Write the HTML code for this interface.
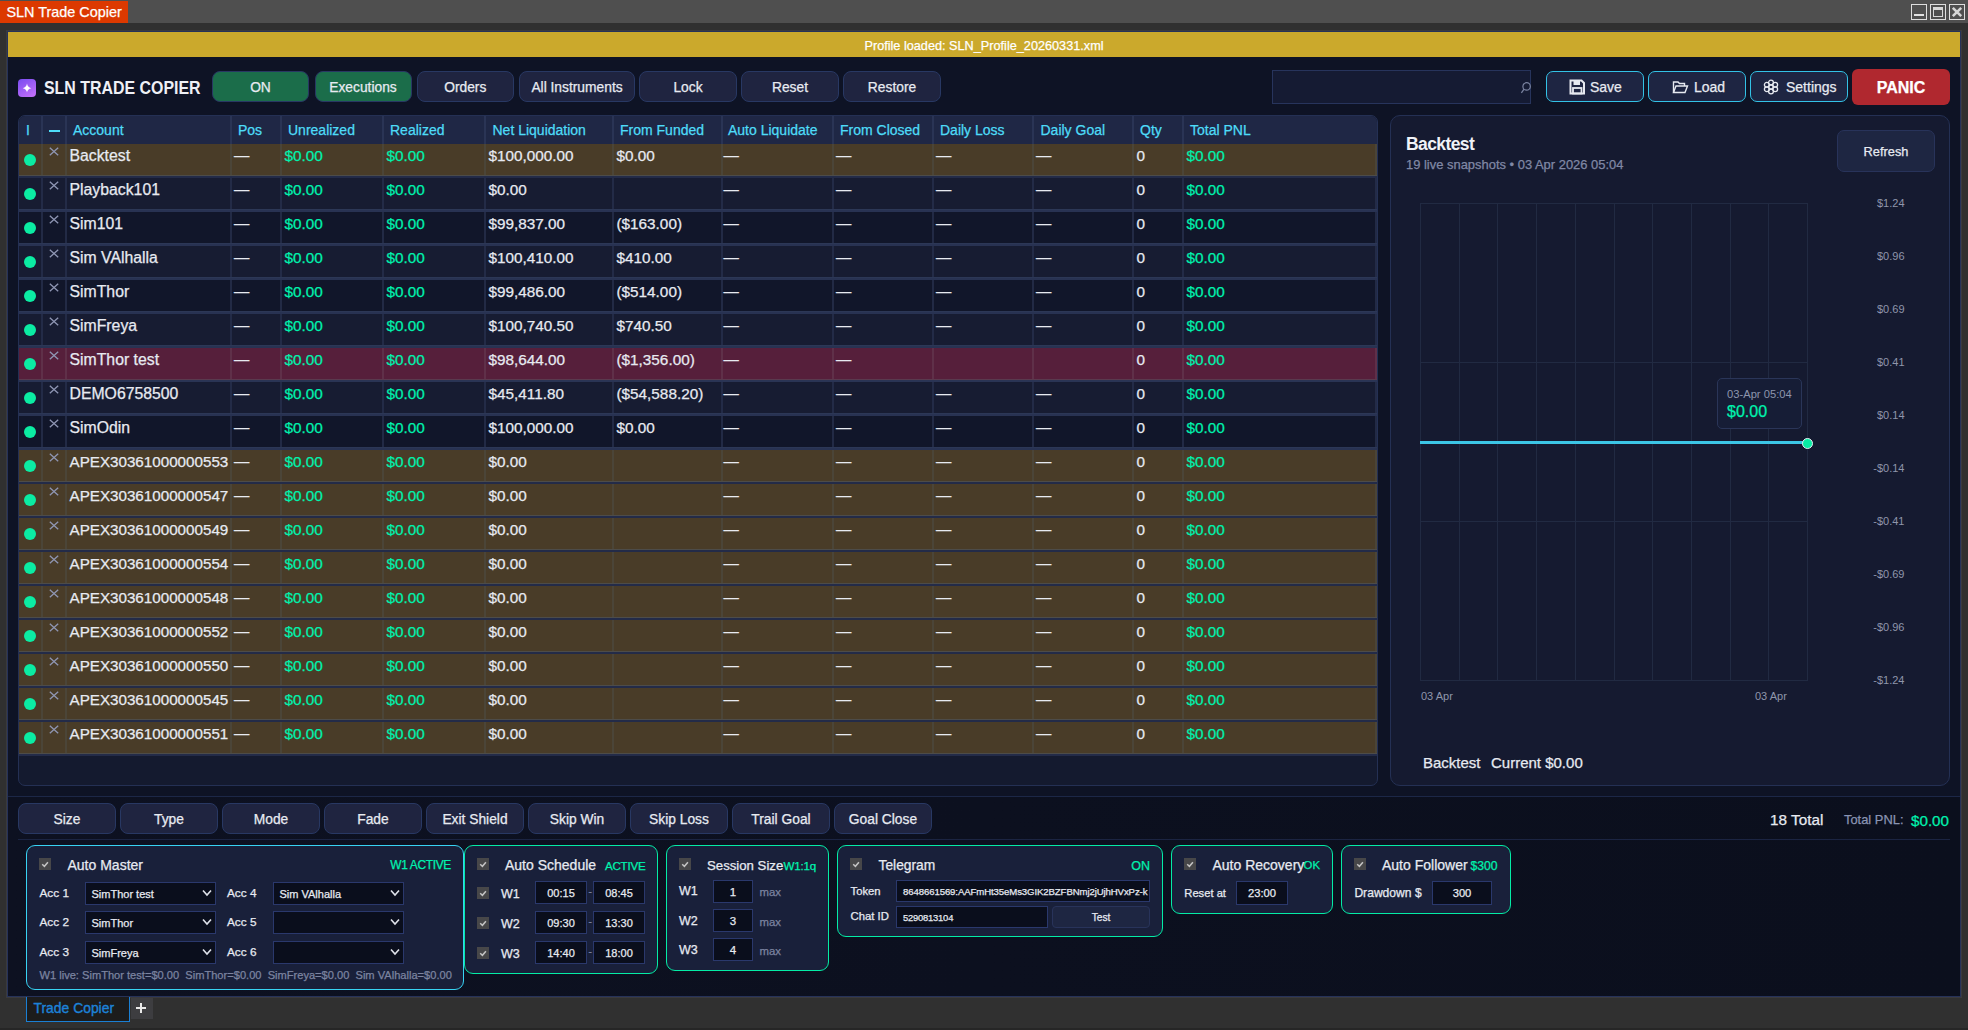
<!DOCTYPE html>
<html><head><meta charset="utf-8"><title>SLN Trade Copier</title>
<style>
html,body{margin:0;padding:0;}
body{width:1968px;height:1030px;overflow:hidden;position:relative;background:#303030;font-family:"Liberation Sans", sans-serif;}
div{position:absolute;}
.t{white-space:nowrap;-webkit-text-stroke:0.25px currentColor;}
</style></head><body>
<div style="left:0px;top:0px;width:1968px;height:23px;background:#4f4f4f"></div>
<div style="left:0px;top:1px;width:128px;height:22px;background:#dc3900"></div>
<div class="t" style="left:6.5px;top:5.01px;font-size:14.4px;line-height:14.4px;color:#ffffff;font-weight:400;">SLN Trade Copier</div>
<div style="left:1911px;top:4px;width:16px;height:16px;border:1.5px solid #dedede;box-sizing:border-box"></div>
<div style="left:1930px;top:4px;width:16px;height:16px;border:1.5px solid #dedede;box-sizing:border-box"></div>
<div style="left:1949px;top:4px;width:16px;height:16px;border:1.5px solid #dedede;box-sizing:border-box"></div>
<div style="left:1914px;top:14px;width:10px;height:2px;background:#e0e0e0"></div>
<div style="left:1933px;top:7px;width:10px;height:10px;border:1px solid #d8d8d8;border-top:3px solid #d8d8d8;box-sizing:border-box"></div>
<svg style="position:absolute;left:1949px;top:4px" width="16" height="16"><path d="M3.8 3.8 L12.2 12.2 M12.2 3.8 L3.8 12.2" stroke="#d6d6d6" stroke-width="2.6"/></svg>
<div style="left:6px;top:30px;width:1956px;height:968px;border:1px solid #3a3a3d;box-sizing:border-box"></div>
<div style="left:7px;top:31px;width:1954px;height:966px;background:#0e1325;border:1px solid #263259;box-sizing:border-box"></div>
<div style="left:8px;top:797px;width:1952px;height:199px;background:linear-gradient(90deg,#0d1121,#0b0f1d)"></div>
<div style="left:8px;top:32px;width:1952px;height:25px;background:#cba92c"></div>
<div class="t" style="left:8px;top:39.55px;font-size:12.7px;line-height:12.7px;color:#ffffff;font-weight:400;width:1952px;text-align:center;">Profile loaded: SLN_Profile_20260331.xml</div>
<div style="left:18px;top:79px;width:18px;height:18px;border-radius:4px;background:linear-gradient(150deg,#784cf0,#c972fb)"></div>
<svg style="position:absolute;left:18px;top:79px" width="18" height="18"><path d="M9 4.6 Q9.5 8.5 13.3 9.2 Q9.5 9.8 9 13.6 Q8.5 9.8 4.7 9.2 Q8.5 8.5 9 4.6Z" fill="#ffffff"/></svg>
<div class="t" style="left:43.5px;top:80.42px;font-size:17.7px;line-height:17.7px;color:#eef0f6;font-weight:700;-webkit-text-stroke:0;transform:scaleX(0.9);transform-origin:0 0">SLN TRADE COPIER</div>
<div style="left:212px;top:71px;width:97px;height:31px;background:#1b6d4a;border:1px solid #283863;border-radius:8px;box-sizing:border-box"></div>
<div class="t" style="left:212px;top:80.82px;font-size:13.8px;line-height:13.8px;color:#e7eaf1;font-weight:400;width:97px;text-align:center;">ON</div>
<div style="left:314.5px;top:71px;width:97px;height:31px;background:#1b6d4a;border:1px solid #283863;border-radius:8px;box-sizing:border-box"></div>
<div class="t" style="left:314.5px;top:80.82px;font-size:13.8px;line-height:13.8px;color:#e7eaf1;font-weight:400;width:97px;text-align:center;">Executions</div>
<div style="left:416.5px;top:71px;width:97.5px;height:31px;background:#1f2440;border:1px solid #283863;border-radius:8px;box-sizing:border-box"></div>
<div class="t" style="left:416.5px;top:80.82px;font-size:13.8px;line-height:13.8px;color:#e7eaf1;font-weight:400;width:97.5px;text-align:center;">Orders</div>
<div style="left:519px;top:71px;width:116px;height:31px;background:#1f2440;border:1px solid #283863;border-radius:8px;box-sizing:border-box"></div>
<div class="t" style="left:519px;top:80.82px;font-size:13.8px;line-height:13.8px;color:#e7eaf1;font-weight:400;width:116px;text-align:center;">All Instruments</div>
<div style="left:639px;top:71px;width:98px;height:31px;background:#1f2440;border:1px solid #283863;border-radius:8px;box-sizing:border-box"></div>
<div class="t" style="left:639px;top:80.82px;font-size:13.8px;line-height:13.8px;color:#e7eaf1;font-weight:400;width:98px;text-align:center;">Lock</div>
<div style="left:741px;top:71px;width:98px;height:31px;background:#1f2440;border:1px solid #283863;border-radius:8px;box-sizing:border-box"></div>
<div class="t" style="left:741px;top:80.82px;font-size:13.8px;line-height:13.8px;color:#e7eaf1;font-weight:400;width:98px;text-align:center;">Reset</div>
<div style="left:843px;top:71px;width:98px;height:31px;background:#1f2440;border:1px solid #283863;border-radius:8px;box-sizing:border-box"></div>
<div class="t" style="left:843px;top:80.82px;font-size:13.8px;line-height:13.8px;color:#e7eaf1;font-weight:400;width:98px;text-align:center;">Restore</div>
<div style="left:1272px;top:70px;width:259px;height:34px;background:#151b33;border:1px solid #27345c;box-sizing:border-box"></div>
<svg style="position:absolute;left:1518px;top:80px" width="14" height="14"><circle cx="8.6" cy="6.4" r="3.7" fill="none" stroke="#7a83a0" stroke-width="1.2"/><path d="M6 9.2 L3.4 12.8" stroke="#7a83a0" stroke-width="1.3"/></svg>
<div style="left:1546px;top:71px;width:98px;height:31px;background:#1e2542;border:1.5px solid #33c2e6;border-radius:7px;box-sizing:border-box"></div>
<div style="left:1648px;top:71px;width:98px;height:31px;background:#1e2542;border:1.5px solid #33c2e6;border-radius:7px;box-sizing:border-box"></div>
<div style="left:1750px;top:71px;width:98px;height:31px;background:#1e2542;border:1.5px solid #33c2e6;border-radius:7px;box-sizing:border-box"></div>
<div class="t" style="left:1590px;top:80.45px;font-size:14px;line-height:14px;color:#e7eaf1;font-weight:400;">Save</div>
<div class="t" style="left:1694px;top:80.45px;font-size:14px;line-height:14px;color:#e7eaf1;font-weight:400;">Load</div>
<div class="t" style="left:1786px;top:80.45px;font-size:14px;line-height:14px;color:#e7eaf1;font-weight:400;">Settings</div>
<svg style="position:absolute;left:1569px;top:79px" width="16" height="16"><path d="M1.5 1.5 H12.5 L15 4 V14.5 H1.5 Z" fill="none" stroke="#e7eaf1" stroke-width="2"/><rect x="4.5" y="2" width="6.5" height="4" fill="#e7eaf1"/><rect x="4" y="9" width="8.5" height="5.5" fill="none" stroke="#e7eaf1" stroke-width="1.8"/></svg>
<svg style="position:absolute;left:1672px;top:79px" width="17" height="16"><path d="M1.5 13.5 V3 H6 L7.5 4.5 H12.5 V7" fill="none" stroke="#e7eaf1" stroke-width="1.4"/><path d="M1.5 13.5 L4 7 H15.5 L13 13.5 Z" fill="none" stroke="#e7eaf1" stroke-width="1.4"/></svg>
<svg style="position:absolute;left:1763px;top:79px" width="16" height="16"><g fill="none" stroke="#e7eaf1" stroke-width="1.3"><circle cx="8" cy="8" r="2.2"/><circle cx="8" cy="3.6" r="2.4"/><circle cx="8" cy="12.4" r="2.4"/><circle cx="3.8" cy="5.8" r="2.4"/><circle cx="12.2" cy="5.8" r="2.4"/><circle cx="3.8" cy="10.2" r="2.4"/><circle cx="12.2" cy="10.2" r="2.4"/></g></svg>
<div style="left:1852px;top:69px;width:98px;height:36px;background:#b0282f;border-radius:6px"></div>
<div class="t" style="left:1852px;top:79.66px;font-size:16px;line-height:16px;color:#ffffff;font-weight:700;width:98px;text-align:center;">PANIC</div>
<div style="left:18px;top:115px;width:1360px;height:671px;background:#141a2f;border:1px solid #243054;border-radius:7px;box-sizing:border-box"></div>
<div style="left:19px;top:116px;width:1358px;height:28px;background:#1f2745;border-radius:6px 6px 0 0"></div>
<div style="left:41px;top:116px;width:2px;height:28px;background:#2a3455"></div>
<div style="left:65px;top:116px;width:2px;height:28px;background:#2a3455"></div>
<div style="left:230px;top:116px;width:2px;height:28px;background:#2a3455"></div>
<div style="left:280px;top:116px;width:2px;height:28px;background:#2a3455"></div>
<div style="left:382px;top:116px;width:2px;height:28px;background:#2a3455"></div>
<div style="left:484px;top:116px;width:2px;height:28px;background:#2a3455"></div>
<div style="left:612px;top:116px;width:2px;height:28px;background:#2a3455"></div>
<div style="left:720.5px;top:116px;width:2px;height:28px;background:#2a3455"></div>
<div style="left:832px;top:116px;width:2px;height:28px;background:#2a3455"></div>
<div style="left:932px;top:116px;width:2px;height:28px;background:#2a3455"></div>
<div style="left:1032px;top:116px;width:2px;height:28px;background:#2a3455"></div>
<div style="left:1132px;top:116px;width:2px;height:28px;background:#2a3455"></div>
<div style="left:1182px;top:116px;width:2px;height:28px;background:#2a3455"></div>
<div style="left:49px;top:130px;width:11px;height:2px;background:#4edcf8"></div>
<div class="t" style="left:26px;top:123.45px;font-size:14px;line-height:14px;color:#4edcf8;font-weight:400;">I</div>
<div class="t" style="left:73px;top:123.45px;font-size:14px;line-height:14px;color:#4edcf8;font-weight:400;">Account</div>
<div class="t" style="left:238px;top:123.45px;font-size:14px;line-height:14px;color:#4edcf8;font-weight:400;">Pos</div>
<div class="t" style="left:288px;top:123.45px;font-size:14px;line-height:14px;color:#4edcf8;font-weight:400;">Unrealized</div>
<div class="t" style="left:390px;top:123.45px;font-size:14px;line-height:14px;color:#4edcf8;font-weight:400;">Realized</div>
<div class="t" style="left:492.5px;top:123.45px;font-size:14px;line-height:14px;color:#4edcf8;font-weight:400;">Net Liquidation</div>
<div class="t" style="left:620px;top:123.45px;font-size:14px;line-height:14px;color:#4edcf8;font-weight:400;">From Funded</div>
<div class="t" style="left:728px;top:123.45px;font-size:14px;line-height:14px;color:#4edcf8;font-weight:400;">Auto Liquidate</div>
<div class="t" style="left:840px;top:123.45px;font-size:14px;line-height:14px;color:#4edcf8;font-weight:400;">From Closed</div>
<div class="t" style="left:940px;top:123.45px;font-size:14px;line-height:14px;color:#4edcf8;font-weight:400;">Daily Loss</div>
<div class="t" style="left:1040.5px;top:123.45px;font-size:14px;line-height:14px;color:#4edcf8;font-weight:400;">Daily Goal</div>
<div class="t" style="left:1140px;top:123.45px;font-size:14px;line-height:14px;color:#4edcf8;font-weight:400;">Qty</div>
<div class="t" style="left:1190px;top:123.45px;font-size:14px;line-height:14px;color:#4edcf8;font-weight:400;">Total PNL</div>
<div style="left:19px;top:144px;width:1358px;height:31px;background:#493c28"></div>
<div style="left:19px;top:175px;width:1358px;height:1px;background:#4d4c49"></div>
<div style="left:19px;top:176px;width:1358px;height:2px;background:#232b48"></div>
<div style="left:41px;top:144px;width:2px;height:31px;background:#4b4538"></div>
<div style="left:65px;top:144px;width:2px;height:31px;background:#4b4538"></div>
<div style="left:230px;top:144px;width:2px;height:31px;background:#4b4538"></div>
<div style="left:280px;top:144px;width:2px;height:31px;background:#4b4538"></div>
<div style="left:382px;top:144px;width:2px;height:31px;background:#4b4538"></div>
<div style="left:484px;top:144px;width:2px;height:31px;background:#4b4538"></div>
<div style="left:612px;top:144px;width:2px;height:31px;background:#4b4538"></div>
<div style="left:720.5px;top:144px;width:2px;height:31px;background:#4b4538"></div>
<div style="left:832px;top:144px;width:2px;height:31px;background:#4b4538"></div>
<div style="left:932px;top:144px;width:2px;height:31px;background:#4b4538"></div>
<div style="left:1032px;top:144px;width:2px;height:31px;background:#4b4538"></div>
<div style="left:1132px;top:144px;width:2px;height:31px;background:#4b4538"></div>
<div style="left:1182px;top:144px;width:2px;height:31px;background:#4b4538"></div>
<div style="left:1375px;top:144px;width:2px;height:31px;background:#4b4538"></div>
<div style="left:24px;top:154px;width:12px;height:12px;border-radius:50%;background:#0becA3"></div>
<svg style="position:absolute;left:49px;top:147px" width="10" height="9"><path d="M0.8 0.8 L9.2 8.2 M9.2 0.8 L0.8 8.2" stroke="#8f96b4" stroke-width="1.3"/></svg>
<div style="left:67px;top:144px;width:163px;height:31px;overflow:hidden">
<div class="t" style="left:2.5px;top:3.93px;font-size:15.8px;line-height:15.8px;color:#e7eaf1;font-weight:400;">Backtest</div>
</div>
<div class="t" style="left:234px;top:147.35px;font-size:15.3px;line-height:15.3px;color:#e7eaf1;font-weight:400;">—</div>
<div class="t" style="left:284.5px;top:148.35px;font-size:15.3px;line-height:15.3px;color:#00f2ae;font-weight:400;">$0.00</div>
<div class="t" style="left:386.5px;top:148.35px;font-size:15.3px;line-height:15.3px;color:#00f2ae;font-weight:400;">$0.00</div>
<div class="t" style="left:488.5px;top:148.35px;font-size:15.3px;line-height:15.3px;color:#e7eaf1;font-weight:400;">$100,000.00</div>
<div class="t" style="left:616.5px;top:148.35px;font-size:15.3px;line-height:15.3px;color:#e7eaf1;font-weight:400;">$0.00</div>
<div class="t" style="left:723.5px;top:147.35px;font-size:15.3px;line-height:15.3px;color:#e7eaf1;font-weight:400;">—</div>
<div class="t" style="left:836px;top:147.35px;font-size:15.3px;line-height:15.3px;color:#e7eaf1;font-weight:400;">—</div>
<div class="t" style="left:936px;top:147.35px;font-size:15.3px;line-height:15.3px;color:#e7eaf1;font-weight:400;">—</div>
<div class="t" style="left:1036px;top:147.35px;font-size:15.3px;line-height:15.3px;color:#e7eaf1;font-weight:400;">—</div>
<div class="t" style="left:1136.5px;top:148.35px;font-size:15.3px;line-height:15.3px;color:#e7eaf1;font-weight:400;">0</div>
<div class="t" style="left:1186.5px;top:148.35px;font-size:15.3px;line-height:15.3px;color:#00f2ae;font-weight:400;">$0.00</div>
<div style="left:19px;top:178px;width:1358px;height:31px;background:#171c32"></div>
<div style="left:19px;top:209px;width:1358px;height:1px;background:#2c3756"></div>
<div style="left:19px;top:210px;width:1358px;height:2px;background:#283252"></div>
<div style="left:41px;top:178px;width:2px;height:31px;background:#232b47"></div>
<div style="left:65px;top:178px;width:2px;height:31px;background:#232b47"></div>
<div style="left:230px;top:178px;width:2px;height:31px;background:#232b47"></div>
<div style="left:280px;top:178px;width:2px;height:31px;background:#232b47"></div>
<div style="left:382px;top:178px;width:2px;height:31px;background:#232b47"></div>
<div style="left:484px;top:178px;width:2px;height:31px;background:#232b47"></div>
<div style="left:612px;top:178px;width:2px;height:31px;background:#232b47"></div>
<div style="left:720.5px;top:178px;width:2px;height:31px;background:#232b47"></div>
<div style="left:832px;top:178px;width:2px;height:31px;background:#232b47"></div>
<div style="left:932px;top:178px;width:2px;height:31px;background:#232b47"></div>
<div style="left:1032px;top:178px;width:2px;height:31px;background:#232b47"></div>
<div style="left:1132px;top:178px;width:2px;height:31px;background:#232b47"></div>
<div style="left:1182px;top:178px;width:2px;height:31px;background:#232b47"></div>
<div style="left:1375px;top:178px;width:2px;height:31px;background:#232b47"></div>
<div style="left:24px;top:188px;width:12px;height:12px;border-radius:50%;background:#0becA3"></div>
<svg style="position:absolute;left:49px;top:181px" width="10" height="9"><path d="M0.8 0.8 L9.2 8.2 M9.2 0.8 L0.8 8.2" stroke="#8f96b4" stroke-width="1.3"/></svg>
<div style="left:67px;top:178px;width:163px;height:31px;overflow:hidden">
<div class="t" style="left:2.5px;top:3.93px;font-size:15.8px;line-height:15.8px;color:#e7eaf1;font-weight:400;">Playback101</div>
</div>
<div class="t" style="left:234px;top:181.35px;font-size:15.3px;line-height:15.3px;color:#e7eaf1;font-weight:400;">—</div>
<div class="t" style="left:284.5px;top:182.35px;font-size:15.3px;line-height:15.3px;color:#00f2ae;font-weight:400;">$0.00</div>
<div class="t" style="left:386.5px;top:182.35px;font-size:15.3px;line-height:15.3px;color:#00f2ae;font-weight:400;">$0.00</div>
<div class="t" style="left:488.5px;top:182.35px;font-size:15.3px;line-height:15.3px;color:#e7eaf1;font-weight:400;">$0.00</div>
<div class="t" style="left:723.5px;top:181.35px;font-size:15.3px;line-height:15.3px;color:#e7eaf1;font-weight:400;">—</div>
<div class="t" style="left:836px;top:181.35px;font-size:15.3px;line-height:15.3px;color:#e7eaf1;font-weight:400;">—</div>
<div class="t" style="left:936px;top:181.35px;font-size:15.3px;line-height:15.3px;color:#e7eaf1;font-weight:400;">—</div>
<div class="t" style="left:1036px;top:181.35px;font-size:15.3px;line-height:15.3px;color:#e7eaf1;font-weight:400;">—</div>
<div class="t" style="left:1136.5px;top:182.35px;font-size:15.3px;line-height:15.3px;color:#e7eaf1;font-weight:400;">0</div>
<div class="t" style="left:1186.5px;top:182.35px;font-size:15.3px;line-height:15.3px;color:#00f2ae;font-weight:400;">$0.00</div>
<div style="left:19px;top:212px;width:1358px;height:31px;background:#11162a"></div>
<div style="left:19px;top:243px;width:1358px;height:1px;background:#2c3756"></div>
<div style="left:19px;top:244px;width:1358px;height:2px;background:#283252"></div>
<div style="left:41px;top:212px;width:2px;height:31px;background:#222a45"></div>
<div style="left:65px;top:212px;width:2px;height:31px;background:#222a45"></div>
<div style="left:230px;top:212px;width:2px;height:31px;background:#222a45"></div>
<div style="left:280px;top:212px;width:2px;height:31px;background:#222a45"></div>
<div style="left:382px;top:212px;width:2px;height:31px;background:#222a45"></div>
<div style="left:484px;top:212px;width:2px;height:31px;background:#222a45"></div>
<div style="left:612px;top:212px;width:2px;height:31px;background:#222a45"></div>
<div style="left:720.5px;top:212px;width:2px;height:31px;background:#222a45"></div>
<div style="left:832px;top:212px;width:2px;height:31px;background:#222a45"></div>
<div style="left:932px;top:212px;width:2px;height:31px;background:#222a45"></div>
<div style="left:1032px;top:212px;width:2px;height:31px;background:#222a45"></div>
<div style="left:1132px;top:212px;width:2px;height:31px;background:#222a45"></div>
<div style="left:1182px;top:212px;width:2px;height:31px;background:#222a45"></div>
<div style="left:1375px;top:212px;width:2px;height:31px;background:#222a45"></div>
<div style="left:24px;top:222px;width:12px;height:12px;border-radius:50%;background:#0becA3"></div>
<svg style="position:absolute;left:49px;top:215px" width="10" height="9"><path d="M0.8 0.8 L9.2 8.2 M9.2 0.8 L0.8 8.2" stroke="#8f96b4" stroke-width="1.3"/></svg>
<div style="left:67px;top:212px;width:163px;height:31px;overflow:hidden">
<div class="t" style="left:2.5px;top:3.93px;font-size:15.8px;line-height:15.8px;color:#e7eaf1;font-weight:400;">Sim101</div>
</div>
<div class="t" style="left:234px;top:215.35px;font-size:15.3px;line-height:15.3px;color:#e7eaf1;font-weight:400;">—</div>
<div class="t" style="left:284.5px;top:216.35px;font-size:15.3px;line-height:15.3px;color:#00f2ae;font-weight:400;">$0.00</div>
<div class="t" style="left:386.5px;top:216.35px;font-size:15.3px;line-height:15.3px;color:#00f2ae;font-weight:400;">$0.00</div>
<div class="t" style="left:488.5px;top:216.35px;font-size:15.3px;line-height:15.3px;color:#e7eaf1;font-weight:400;">$99,837.00</div>
<div class="t" style="left:616.5px;top:216.35px;font-size:15.3px;line-height:15.3px;color:#e7eaf1;font-weight:400;">($163.00)</div>
<div class="t" style="left:723.5px;top:215.35px;font-size:15.3px;line-height:15.3px;color:#e7eaf1;font-weight:400;">—</div>
<div class="t" style="left:836px;top:215.35px;font-size:15.3px;line-height:15.3px;color:#e7eaf1;font-weight:400;">—</div>
<div class="t" style="left:936px;top:215.35px;font-size:15.3px;line-height:15.3px;color:#e7eaf1;font-weight:400;">—</div>
<div class="t" style="left:1036px;top:215.35px;font-size:15.3px;line-height:15.3px;color:#e7eaf1;font-weight:400;">—</div>
<div class="t" style="left:1136.5px;top:216.35px;font-size:15.3px;line-height:15.3px;color:#e7eaf1;font-weight:400;">0</div>
<div class="t" style="left:1186.5px;top:216.35px;font-size:15.3px;line-height:15.3px;color:#00f2ae;font-weight:400;">$0.00</div>
<div style="left:19px;top:246px;width:1358px;height:31px;background:#171c32"></div>
<div style="left:19px;top:277px;width:1358px;height:1px;background:#2c3756"></div>
<div style="left:19px;top:278px;width:1358px;height:2px;background:#283252"></div>
<div style="left:41px;top:246px;width:2px;height:31px;background:#232b47"></div>
<div style="left:65px;top:246px;width:2px;height:31px;background:#232b47"></div>
<div style="left:230px;top:246px;width:2px;height:31px;background:#232b47"></div>
<div style="left:280px;top:246px;width:2px;height:31px;background:#232b47"></div>
<div style="left:382px;top:246px;width:2px;height:31px;background:#232b47"></div>
<div style="left:484px;top:246px;width:2px;height:31px;background:#232b47"></div>
<div style="left:612px;top:246px;width:2px;height:31px;background:#232b47"></div>
<div style="left:720.5px;top:246px;width:2px;height:31px;background:#232b47"></div>
<div style="left:832px;top:246px;width:2px;height:31px;background:#232b47"></div>
<div style="left:932px;top:246px;width:2px;height:31px;background:#232b47"></div>
<div style="left:1032px;top:246px;width:2px;height:31px;background:#232b47"></div>
<div style="left:1132px;top:246px;width:2px;height:31px;background:#232b47"></div>
<div style="left:1182px;top:246px;width:2px;height:31px;background:#232b47"></div>
<div style="left:1375px;top:246px;width:2px;height:31px;background:#232b47"></div>
<div style="left:24px;top:256px;width:12px;height:12px;border-radius:50%;background:#0becA3"></div>
<svg style="position:absolute;left:49px;top:249px" width="10" height="9"><path d="M0.8 0.8 L9.2 8.2 M9.2 0.8 L0.8 8.2" stroke="#8f96b4" stroke-width="1.3"/></svg>
<div style="left:67px;top:246px;width:163px;height:31px;overflow:hidden">
<div class="t" style="left:2.5px;top:3.93px;font-size:15.8px;line-height:15.8px;color:#e7eaf1;font-weight:400;">Sim VAlhalla</div>
</div>
<div class="t" style="left:234px;top:249.35px;font-size:15.3px;line-height:15.3px;color:#e7eaf1;font-weight:400;">—</div>
<div class="t" style="left:284.5px;top:250.35px;font-size:15.3px;line-height:15.3px;color:#00f2ae;font-weight:400;">$0.00</div>
<div class="t" style="left:386.5px;top:250.35px;font-size:15.3px;line-height:15.3px;color:#00f2ae;font-weight:400;">$0.00</div>
<div class="t" style="left:488.5px;top:250.35px;font-size:15.3px;line-height:15.3px;color:#e7eaf1;font-weight:400;">$100,410.00</div>
<div class="t" style="left:616.5px;top:250.35px;font-size:15.3px;line-height:15.3px;color:#e7eaf1;font-weight:400;">$410.00</div>
<div class="t" style="left:723.5px;top:249.35px;font-size:15.3px;line-height:15.3px;color:#e7eaf1;font-weight:400;">—</div>
<div class="t" style="left:836px;top:249.35px;font-size:15.3px;line-height:15.3px;color:#e7eaf1;font-weight:400;">—</div>
<div class="t" style="left:936px;top:249.35px;font-size:15.3px;line-height:15.3px;color:#e7eaf1;font-weight:400;">—</div>
<div class="t" style="left:1036px;top:249.35px;font-size:15.3px;line-height:15.3px;color:#e7eaf1;font-weight:400;">—</div>
<div class="t" style="left:1136.5px;top:250.35px;font-size:15.3px;line-height:15.3px;color:#e7eaf1;font-weight:400;">0</div>
<div class="t" style="left:1186.5px;top:250.35px;font-size:15.3px;line-height:15.3px;color:#00f2ae;font-weight:400;">$0.00</div>
<div style="left:19px;top:280px;width:1358px;height:31px;background:#11162a"></div>
<div style="left:19px;top:311px;width:1358px;height:1px;background:#2c3756"></div>
<div style="left:19px;top:312px;width:1358px;height:2px;background:#283252"></div>
<div style="left:41px;top:280px;width:2px;height:31px;background:#222a45"></div>
<div style="left:65px;top:280px;width:2px;height:31px;background:#222a45"></div>
<div style="left:230px;top:280px;width:2px;height:31px;background:#222a45"></div>
<div style="left:280px;top:280px;width:2px;height:31px;background:#222a45"></div>
<div style="left:382px;top:280px;width:2px;height:31px;background:#222a45"></div>
<div style="left:484px;top:280px;width:2px;height:31px;background:#222a45"></div>
<div style="left:612px;top:280px;width:2px;height:31px;background:#222a45"></div>
<div style="left:720.5px;top:280px;width:2px;height:31px;background:#222a45"></div>
<div style="left:832px;top:280px;width:2px;height:31px;background:#222a45"></div>
<div style="left:932px;top:280px;width:2px;height:31px;background:#222a45"></div>
<div style="left:1032px;top:280px;width:2px;height:31px;background:#222a45"></div>
<div style="left:1132px;top:280px;width:2px;height:31px;background:#222a45"></div>
<div style="left:1182px;top:280px;width:2px;height:31px;background:#222a45"></div>
<div style="left:1375px;top:280px;width:2px;height:31px;background:#222a45"></div>
<div style="left:24px;top:290px;width:12px;height:12px;border-radius:50%;background:#0becA3"></div>
<svg style="position:absolute;left:49px;top:283px" width="10" height="9"><path d="M0.8 0.8 L9.2 8.2 M9.2 0.8 L0.8 8.2" stroke="#8f96b4" stroke-width="1.3"/></svg>
<div style="left:67px;top:280px;width:163px;height:31px;overflow:hidden">
<div class="t" style="left:2.5px;top:3.93px;font-size:15.8px;line-height:15.8px;color:#e7eaf1;font-weight:400;">SimThor</div>
</div>
<div class="t" style="left:234px;top:283.35px;font-size:15.3px;line-height:15.3px;color:#e7eaf1;font-weight:400;">—</div>
<div class="t" style="left:284.5px;top:284.35px;font-size:15.3px;line-height:15.3px;color:#00f2ae;font-weight:400;">$0.00</div>
<div class="t" style="left:386.5px;top:284.35px;font-size:15.3px;line-height:15.3px;color:#00f2ae;font-weight:400;">$0.00</div>
<div class="t" style="left:488.5px;top:284.35px;font-size:15.3px;line-height:15.3px;color:#e7eaf1;font-weight:400;">$99,486.00</div>
<div class="t" style="left:616.5px;top:284.35px;font-size:15.3px;line-height:15.3px;color:#e7eaf1;font-weight:400;">($514.00)</div>
<div class="t" style="left:723.5px;top:283.35px;font-size:15.3px;line-height:15.3px;color:#e7eaf1;font-weight:400;">—</div>
<div class="t" style="left:836px;top:283.35px;font-size:15.3px;line-height:15.3px;color:#e7eaf1;font-weight:400;">—</div>
<div class="t" style="left:936px;top:283.35px;font-size:15.3px;line-height:15.3px;color:#e7eaf1;font-weight:400;">—</div>
<div class="t" style="left:1036px;top:283.35px;font-size:15.3px;line-height:15.3px;color:#e7eaf1;font-weight:400;">—</div>
<div class="t" style="left:1136.5px;top:284.35px;font-size:15.3px;line-height:15.3px;color:#e7eaf1;font-weight:400;">0</div>
<div class="t" style="left:1186.5px;top:284.35px;font-size:15.3px;line-height:15.3px;color:#00f2ae;font-weight:400;">$0.00</div>
<div style="left:19px;top:314px;width:1358px;height:31px;background:#171c32"></div>
<div style="left:19px;top:345px;width:1358px;height:1px;background:#2c3756"></div>
<div style="left:19px;top:346px;width:1358px;height:2px;background:#283252"></div>
<div style="left:41px;top:314px;width:2px;height:31px;background:#232b47"></div>
<div style="left:65px;top:314px;width:2px;height:31px;background:#232b47"></div>
<div style="left:230px;top:314px;width:2px;height:31px;background:#232b47"></div>
<div style="left:280px;top:314px;width:2px;height:31px;background:#232b47"></div>
<div style="left:382px;top:314px;width:2px;height:31px;background:#232b47"></div>
<div style="left:484px;top:314px;width:2px;height:31px;background:#232b47"></div>
<div style="left:612px;top:314px;width:2px;height:31px;background:#232b47"></div>
<div style="left:720.5px;top:314px;width:2px;height:31px;background:#232b47"></div>
<div style="left:832px;top:314px;width:2px;height:31px;background:#232b47"></div>
<div style="left:932px;top:314px;width:2px;height:31px;background:#232b47"></div>
<div style="left:1032px;top:314px;width:2px;height:31px;background:#232b47"></div>
<div style="left:1132px;top:314px;width:2px;height:31px;background:#232b47"></div>
<div style="left:1182px;top:314px;width:2px;height:31px;background:#232b47"></div>
<div style="left:1375px;top:314px;width:2px;height:31px;background:#232b47"></div>
<div style="left:24px;top:324px;width:12px;height:12px;border-radius:50%;background:#0becA3"></div>
<svg style="position:absolute;left:49px;top:317px" width="10" height="9"><path d="M0.8 0.8 L9.2 8.2 M9.2 0.8 L0.8 8.2" stroke="#8f96b4" stroke-width="1.3"/></svg>
<div style="left:67px;top:314px;width:163px;height:31px;overflow:hidden">
<div class="t" style="left:2.5px;top:3.93px;font-size:15.8px;line-height:15.8px;color:#e7eaf1;font-weight:400;">SimFreya</div>
</div>
<div class="t" style="left:234px;top:317.35px;font-size:15.3px;line-height:15.3px;color:#e7eaf1;font-weight:400;">—</div>
<div class="t" style="left:284.5px;top:318.35px;font-size:15.3px;line-height:15.3px;color:#00f2ae;font-weight:400;">$0.00</div>
<div class="t" style="left:386.5px;top:318.35px;font-size:15.3px;line-height:15.3px;color:#00f2ae;font-weight:400;">$0.00</div>
<div class="t" style="left:488.5px;top:318.35px;font-size:15.3px;line-height:15.3px;color:#e7eaf1;font-weight:400;">$100,740.50</div>
<div class="t" style="left:616.5px;top:318.35px;font-size:15.3px;line-height:15.3px;color:#e7eaf1;font-weight:400;">$740.50</div>
<div class="t" style="left:723.5px;top:317.35px;font-size:15.3px;line-height:15.3px;color:#e7eaf1;font-weight:400;">—</div>
<div class="t" style="left:836px;top:317.35px;font-size:15.3px;line-height:15.3px;color:#e7eaf1;font-weight:400;">—</div>
<div class="t" style="left:936px;top:317.35px;font-size:15.3px;line-height:15.3px;color:#e7eaf1;font-weight:400;">—</div>
<div class="t" style="left:1036px;top:317.35px;font-size:15.3px;line-height:15.3px;color:#e7eaf1;font-weight:400;">—</div>
<div class="t" style="left:1136.5px;top:318.35px;font-size:15.3px;line-height:15.3px;color:#e7eaf1;font-weight:400;">0</div>
<div class="t" style="left:1186.5px;top:318.35px;font-size:15.3px;line-height:15.3px;color:#00f2ae;font-weight:400;">$0.00</div>
<div style="left:19px;top:348px;width:1358px;height:31px;background:#561f3b"></div>
<div style="left:19px;top:379px;width:1358px;height:1px;background:#5a3a4e"></div>
<div style="left:19px;top:380px;width:1358px;height:2px;background:#2a3454"></div>
<div style="left:41px;top:348px;width:2px;height:31px;background:#5f3049"></div>
<div style="left:65px;top:348px;width:2px;height:31px;background:#5f3049"></div>
<div style="left:230px;top:348px;width:2px;height:31px;background:#5f3049"></div>
<div style="left:280px;top:348px;width:2px;height:31px;background:#5f3049"></div>
<div style="left:382px;top:348px;width:2px;height:31px;background:#5f3049"></div>
<div style="left:484px;top:348px;width:2px;height:31px;background:#5f3049"></div>
<div style="left:612px;top:348px;width:2px;height:31px;background:#5f3049"></div>
<div style="left:720.5px;top:348px;width:2px;height:31px;background:#5f3049"></div>
<div style="left:832px;top:348px;width:2px;height:31px;background:#5f3049"></div>
<div style="left:932px;top:348px;width:2px;height:31px;background:#5f3049"></div>
<div style="left:1032px;top:348px;width:2px;height:31px;background:#5f3049"></div>
<div style="left:1132px;top:348px;width:2px;height:31px;background:#5f3049"></div>
<div style="left:1182px;top:348px;width:2px;height:31px;background:#5f3049"></div>
<div style="left:1375px;top:348px;width:2px;height:31px;background:#5f3049"></div>
<div style="left:24px;top:358px;width:12px;height:12px;border-radius:50%;background:#0becA3"></div>
<svg style="position:absolute;left:49px;top:351px" width="10" height="9"><path d="M0.8 0.8 L9.2 8.2 M9.2 0.8 L0.8 8.2" stroke="#8f96b4" stroke-width="1.3"/></svg>
<div style="left:67px;top:348px;width:163px;height:31px;overflow:hidden">
<div class="t" style="left:2.5px;top:3.93px;font-size:15.8px;line-height:15.8px;color:#e7eaf1;font-weight:400;">SimThor test</div>
</div>
<div class="t" style="left:234px;top:351.35px;font-size:15.3px;line-height:15.3px;color:#e7eaf1;font-weight:400;">—</div>
<div class="t" style="left:284.5px;top:352.35px;font-size:15.3px;line-height:15.3px;color:#00f2ae;font-weight:400;">$0.00</div>
<div class="t" style="left:386.5px;top:352.35px;font-size:15.3px;line-height:15.3px;color:#00f2ae;font-weight:400;">$0.00</div>
<div class="t" style="left:488.5px;top:352.35px;font-size:15.3px;line-height:15.3px;color:#e7eaf1;font-weight:400;">$98,644.00</div>
<div class="t" style="left:616.5px;top:352.35px;font-size:15.3px;line-height:15.3px;color:#e7eaf1;font-weight:400;">($1,356.00)</div>
<div class="t" style="left:723.5px;top:351.35px;font-size:15.3px;line-height:15.3px;color:#e7eaf1;font-weight:400;">—</div>
<div class="t" style="left:836px;top:351.35px;font-size:15.3px;line-height:15.3px;color:#e7eaf1;font-weight:400;">—</div>
<div class="t" style="left:1136.5px;top:352.35px;font-size:15.3px;line-height:15.3px;color:#e7eaf1;font-weight:400;">0</div>
<div class="t" style="left:1186.5px;top:352.35px;font-size:15.3px;line-height:15.3px;color:#00f2ae;font-weight:400;">$0.00</div>
<div style="left:19px;top:382px;width:1358px;height:31px;background:#171c32"></div>
<div style="left:19px;top:413px;width:1358px;height:1px;background:#2c3756"></div>
<div style="left:19px;top:414px;width:1358px;height:2px;background:#283252"></div>
<div style="left:41px;top:382px;width:2px;height:31px;background:#232b47"></div>
<div style="left:65px;top:382px;width:2px;height:31px;background:#232b47"></div>
<div style="left:230px;top:382px;width:2px;height:31px;background:#232b47"></div>
<div style="left:280px;top:382px;width:2px;height:31px;background:#232b47"></div>
<div style="left:382px;top:382px;width:2px;height:31px;background:#232b47"></div>
<div style="left:484px;top:382px;width:2px;height:31px;background:#232b47"></div>
<div style="left:612px;top:382px;width:2px;height:31px;background:#232b47"></div>
<div style="left:720.5px;top:382px;width:2px;height:31px;background:#232b47"></div>
<div style="left:832px;top:382px;width:2px;height:31px;background:#232b47"></div>
<div style="left:932px;top:382px;width:2px;height:31px;background:#232b47"></div>
<div style="left:1032px;top:382px;width:2px;height:31px;background:#232b47"></div>
<div style="left:1132px;top:382px;width:2px;height:31px;background:#232b47"></div>
<div style="left:1182px;top:382px;width:2px;height:31px;background:#232b47"></div>
<div style="left:1375px;top:382px;width:2px;height:31px;background:#232b47"></div>
<div style="left:24px;top:392px;width:12px;height:12px;border-radius:50%;background:#0becA3"></div>
<svg style="position:absolute;left:49px;top:385px" width="10" height="9"><path d="M0.8 0.8 L9.2 8.2 M9.2 0.8 L0.8 8.2" stroke="#8f96b4" stroke-width="1.3"/></svg>
<div style="left:67px;top:382px;width:163px;height:31px;overflow:hidden">
<div class="t" style="left:2.5px;top:3.93px;font-size:15.8px;line-height:15.8px;color:#e7eaf1;font-weight:400;">DEMO6758500</div>
</div>
<div class="t" style="left:234px;top:385.35px;font-size:15.3px;line-height:15.3px;color:#e7eaf1;font-weight:400;">—</div>
<div class="t" style="left:284.5px;top:386.35px;font-size:15.3px;line-height:15.3px;color:#00f2ae;font-weight:400;">$0.00</div>
<div class="t" style="left:386.5px;top:386.35px;font-size:15.3px;line-height:15.3px;color:#00f2ae;font-weight:400;">$0.00</div>
<div class="t" style="left:488.5px;top:386.35px;font-size:15.3px;line-height:15.3px;color:#e7eaf1;font-weight:400;">$45,411.80</div>
<div class="t" style="left:616.5px;top:386.35px;font-size:15.3px;line-height:15.3px;color:#e7eaf1;font-weight:400;">($54,588.20)</div>
<div class="t" style="left:723.5px;top:385.35px;font-size:15.3px;line-height:15.3px;color:#e7eaf1;font-weight:400;">—</div>
<div class="t" style="left:836px;top:385.35px;font-size:15.3px;line-height:15.3px;color:#e7eaf1;font-weight:400;">—</div>
<div class="t" style="left:936px;top:385.35px;font-size:15.3px;line-height:15.3px;color:#e7eaf1;font-weight:400;">—</div>
<div class="t" style="left:1036px;top:385.35px;font-size:15.3px;line-height:15.3px;color:#e7eaf1;font-weight:400;">—</div>
<div class="t" style="left:1136.5px;top:386.35px;font-size:15.3px;line-height:15.3px;color:#e7eaf1;font-weight:400;">0</div>
<div class="t" style="left:1186.5px;top:386.35px;font-size:15.3px;line-height:15.3px;color:#00f2ae;font-weight:400;">$0.00</div>
<div style="left:19px;top:416px;width:1358px;height:31px;background:#11162a"></div>
<div style="left:19px;top:447px;width:1358px;height:1px;background:#2c3756"></div>
<div style="left:19px;top:448px;width:1358px;height:2px;background:#283252"></div>
<div style="left:41px;top:416px;width:2px;height:31px;background:#222a45"></div>
<div style="left:65px;top:416px;width:2px;height:31px;background:#222a45"></div>
<div style="left:230px;top:416px;width:2px;height:31px;background:#222a45"></div>
<div style="left:280px;top:416px;width:2px;height:31px;background:#222a45"></div>
<div style="left:382px;top:416px;width:2px;height:31px;background:#222a45"></div>
<div style="left:484px;top:416px;width:2px;height:31px;background:#222a45"></div>
<div style="left:612px;top:416px;width:2px;height:31px;background:#222a45"></div>
<div style="left:720.5px;top:416px;width:2px;height:31px;background:#222a45"></div>
<div style="left:832px;top:416px;width:2px;height:31px;background:#222a45"></div>
<div style="left:932px;top:416px;width:2px;height:31px;background:#222a45"></div>
<div style="left:1032px;top:416px;width:2px;height:31px;background:#222a45"></div>
<div style="left:1132px;top:416px;width:2px;height:31px;background:#222a45"></div>
<div style="left:1182px;top:416px;width:2px;height:31px;background:#222a45"></div>
<div style="left:1375px;top:416px;width:2px;height:31px;background:#222a45"></div>
<div style="left:24px;top:426px;width:12px;height:12px;border-radius:50%;background:#0becA3"></div>
<svg style="position:absolute;left:49px;top:419px" width="10" height="9"><path d="M0.8 0.8 L9.2 8.2 M9.2 0.8 L0.8 8.2" stroke="#8f96b4" stroke-width="1.3"/></svg>
<div style="left:67px;top:416px;width:163px;height:31px;overflow:hidden">
<div class="t" style="left:2.5px;top:3.93px;font-size:15.8px;line-height:15.8px;color:#e7eaf1;font-weight:400;">SimOdin</div>
</div>
<div class="t" style="left:234px;top:419.35px;font-size:15.3px;line-height:15.3px;color:#e7eaf1;font-weight:400;">—</div>
<div class="t" style="left:284.5px;top:420.35px;font-size:15.3px;line-height:15.3px;color:#00f2ae;font-weight:400;">$0.00</div>
<div class="t" style="left:386.5px;top:420.35px;font-size:15.3px;line-height:15.3px;color:#00f2ae;font-weight:400;">$0.00</div>
<div class="t" style="left:488.5px;top:420.35px;font-size:15.3px;line-height:15.3px;color:#e7eaf1;font-weight:400;">$100,000.00</div>
<div class="t" style="left:616.5px;top:420.35px;font-size:15.3px;line-height:15.3px;color:#e7eaf1;font-weight:400;">$0.00</div>
<div class="t" style="left:723.5px;top:419.35px;font-size:15.3px;line-height:15.3px;color:#e7eaf1;font-weight:400;">—</div>
<div class="t" style="left:836px;top:419.35px;font-size:15.3px;line-height:15.3px;color:#e7eaf1;font-weight:400;">—</div>
<div class="t" style="left:936px;top:419.35px;font-size:15.3px;line-height:15.3px;color:#e7eaf1;font-weight:400;">—</div>
<div class="t" style="left:1036px;top:419.35px;font-size:15.3px;line-height:15.3px;color:#e7eaf1;font-weight:400;">—</div>
<div class="t" style="left:1136.5px;top:420.35px;font-size:15.3px;line-height:15.3px;color:#e7eaf1;font-weight:400;">0</div>
<div class="t" style="left:1186.5px;top:420.35px;font-size:15.3px;line-height:15.3px;color:#00f2ae;font-weight:400;">$0.00</div>
<div style="left:19px;top:450px;width:1358px;height:31px;background:#493c28"></div>
<div style="left:19px;top:481px;width:1358px;height:1px;background:#4d4c49"></div>
<div style="left:19px;top:482px;width:1358px;height:2px;background:#232b48"></div>
<div style="left:41px;top:450px;width:2px;height:31px;background:#4b4538"></div>
<div style="left:65px;top:450px;width:2px;height:31px;background:#4b4538"></div>
<div style="left:230px;top:450px;width:2px;height:31px;background:#4b4538"></div>
<div style="left:280px;top:450px;width:2px;height:31px;background:#4b4538"></div>
<div style="left:382px;top:450px;width:2px;height:31px;background:#4b4538"></div>
<div style="left:484px;top:450px;width:2px;height:31px;background:#4b4538"></div>
<div style="left:612px;top:450px;width:2px;height:31px;background:#4b4538"></div>
<div style="left:720.5px;top:450px;width:2px;height:31px;background:#4b4538"></div>
<div style="left:832px;top:450px;width:2px;height:31px;background:#4b4538"></div>
<div style="left:932px;top:450px;width:2px;height:31px;background:#4b4538"></div>
<div style="left:1032px;top:450px;width:2px;height:31px;background:#4b4538"></div>
<div style="left:1132px;top:450px;width:2px;height:31px;background:#4b4538"></div>
<div style="left:1182px;top:450px;width:2px;height:31px;background:#4b4538"></div>
<div style="left:1375px;top:450px;width:2px;height:31px;background:#4b4538"></div>
<div style="left:24px;top:460px;width:12px;height:12px;border-radius:50%;background:#0becA3"></div>
<svg style="position:absolute;left:49px;top:453px" width="10" height="9"><path d="M0.8 0.8 L9.2 8.2 M9.2 0.8 L0.8 8.2" stroke="#8f96b4" stroke-width="1.3"/></svg>
<div style="left:67px;top:450px;width:163px;height:31px;overflow:hidden">
<div class="t" style="left:2.5px;top:4.43px;font-size:15.2px;line-height:15.2px;color:#e7eaf1;font-weight:400;">APEX30361000000553</div>
</div>
<div class="t" style="left:234px;top:453.35px;font-size:15.3px;line-height:15.3px;color:#e7eaf1;font-weight:400;">—</div>
<div class="t" style="left:284.5px;top:454.35px;font-size:15.3px;line-height:15.3px;color:#00f2ae;font-weight:400;">$0.00</div>
<div class="t" style="left:386.5px;top:454.35px;font-size:15.3px;line-height:15.3px;color:#00f2ae;font-weight:400;">$0.00</div>
<div class="t" style="left:488.5px;top:454.35px;font-size:15.3px;line-height:15.3px;color:#e7eaf1;font-weight:400;">$0.00</div>
<div class="t" style="left:723.5px;top:453.35px;font-size:15.3px;line-height:15.3px;color:#e7eaf1;font-weight:400;">—</div>
<div class="t" style="left:836px;top:453.35px;font-size:15.3px;line-height:15.3px;color:#e7eaf1;font-weight:400;">—</div>
<div class="t" style="left:936px;top:453.35px;font-size:15.3px;line-height:15.3px;color:#e7eaf1;font-weight:400;">—</div>
<div class="t" style="left:1036px;top:453.35px;font-size:15.3px;line-height:15.3px;color:#e7eaf1;font-weight:400;">—</div>
<div class="t" style="left:1136.5px;top:454.35px;font-size:15.3px;line-height:15.3px;color:#e7eaf1;font-weight:400;">0</div>
<div class="t" style="left:1186.5px;top:454.35px;font-size:15.3px;line-height:15.3px;color:#00f2ae;font-weight:400;">$0.00</div>
<div style="left:19px;top:484px;width:1358px;height:31px;background:#493c28"></div>
<div style="left:19px;top:515px;width:1358px;height:1px;background:#4d4c49"></div>
<div style="left:19px;top:516px;width:1358px;height:2px;background:#232b48"></div>
<div style="left:41px;top:484px;width:2px;height:31px;background:#4b4538"></div>
<div style="left:65px;top:484px;width:2px;height:31px;background:#4b4538"></div>
<div style="left:230px;top:484px;width:2px;height:31px;background:#4b4538"></div>
<div style="left:280px;top:484px;width:2px;height:31px;background:#4b4538"></div>
<div style="left:382px;top:484px;width:2px;height:31px;background:#4b4538"></div>
<div style="left:484px;top:484px;width:2px;height:31px;background:#4b4538"></div>
<div style="left:612px;top:484px;width:2px;height:31px;background:#4b4538"></div>
<div style="left:720.5px;top:484px;width:2px;height:31px;background:#4b4538"></div>
<div style="left:832px;top:484px;width:2px;height:31px;background:#4b4538"></div>
<div style="left:932px;top:484px;width:2px;height:31px;background:#4b4538"></div>
<div style="left:1032px;top:484px;width:2px;height:31px;background:#4b4538"></div>
<div style="left:1132px;top:484px;width:2px;height:31px;background:#4b4538"></div>
<div style="left:1182px;top:484px;width:2px;height:31px;background:#4b4538"></div>
<div style="left:1375px;top:484px;width:2px;height:31px;background:#4b4538"></div>
<div style="left:24px;top:494px;width:12px;height:12px;border-radius:50%;background:#0becA3"></div>
<svg style="position:absolute;left:49px;top:487px" width="10" height="9"><path d="M0.8 0.8 L9.2 8.2 M9.2 0.8 L0.8 8.2" stroke="#8f96b4" stroke-width="1.3"/></svg>
<div style="left:67px;top:484px;width:163px;height:31px;overflow:hidden">
<div class="t" style="left:2.5px;top:4.43px;font-size:15.2px;line-height:15.2px;color:#e7eaf1;font-weight:400;">APEX30361000000547</div>
</div>
<div class="t" style="left:234px;top:487.35px;font-size:15.3px;line-height:15.3px;color:#e7eaf1;font-weight:400;">—</div>
<div class="t" style="left:284.5px;top:488.35px;font-size:15.3px;line-height:15.3px;color:#00f2ae;font-weight:400;">$0.00</div>
<div class="t" style="left:386.5px;top:488.35px;font-size:15.3px;line-height:15.3px;color:#00f2ae;font-weight:400;">$0.00</div>
<div class="t" style="left:488.5px;top:488.35px;font-size:15.3px;line-height:15.3px;color:#e7eaf1;font-weight:400;">$0.00</div>
<div class="t" style="left:723.5px;top:487.35px;font-size:15.3px;line-height:15.3px;color:#e7eaf1;font-weight:400;">—</div>
<div class="t" style="left:836px;top:487.35px;font-size:15.3px;line-height:15.3px;color:#e7eaf1;font-weight:400;">—</div>
<div class="t" style="left:936px;top:487.35px;font-size:15.3px;line-height:15.3px;color:#e7eaf1;font-weight:400;">—</div>
<div class="t" style="left:1036px;top:487.35px;font-size:15.3px;line-height:15.3px;color:#e7eaf1;font-weight:400;">—</div>
<div class="t" style="left:1136.5px;top:488.35px;font-size:15.3px;line-height:15.3px;color:#e7eaf1;font-weight:400;">0</div>
<div class="t" style="left:1186.5px;top:488.35px;font-size:15.3px;line-height:15.3px;color:#00f2ae;font-weight:400;">$0.00</div>
<div style="left:19px;top:518px;width:1358px;height:31px;background:#493c28"></div>
<div style="left:19px;top:549px;width:1358px;height:1px;background:#4d4c49"></div>
<div style="left:19px;top:550px;width:1358px;height:2px;background:#232b48"></div>
<div style="left:41px;top:518px;width:2px;height:31px;background:#4b4538"></div>
<div style="left:65px;top:518px;width:2px;height:31px;background:#4b4538"></div>
<div style="left:230px;top:518px;width:2px;height:31px;background:#4b4538"></div>
<div style="left:280px;top:518px;width:2px;height:31px;background:#4b4538"></div>
<div style="left:382px;top:518px;width:2px;height:31px;background:#4b4538"></div>
<div style="left:484px;top:518px;width:2px;height:31px;background:#4b4538"></div>
<div style="left:612px;top:518px;width:2px;height:31px;background:#4b4538"></div>
<div style="left:720.5px;top:518px;width:2px;height:31px;background:#4b4538"></div>
<div style="left:832px;top:518px;width:2px;height:31px;background:#4b4538"></div>
<div style="left:932px;top:518px;width:2px;height:31px;background:#4b4538"></div>
<div style="left:1032px;top:518px;width:2px;height:31px;background:#4b4538"></div>
<div style="left:1132px;top:518px;width:2px;height:31px;background:#4b4538"></div>
<div style="left:1182px;top:518px;width:2px;height:31px;background:#4b4538"></div>
<div style="left:1375px;top:518px;width:2px;height:31px;background:#4b4538"></div>
<div style="left:24px;top:528px;width:12px;height:12px;border-radius:50%;background:#0becA3"></div>
<svg style="position:absolute;left:49px;top:521px" width="10" height="9"><path d="M0.8 0.8 L9.2 8.2 M9.2 0.8 L0.8 8.2" stroke="#8f96b4" stroke-width="1.3"/></svg>
<div style="left:67px;top:518px;width:163px;height:31px;overflow:hidden">
<div class="t" style="left:2.5px;top:4.43px;font-size:15.2px;line-height:15.2px;color:#e7eaf1;font-weight:400;">APEX30361000000549</div>
</div>
<div class="t" style="left:234px;top:521.35px;font-size:15.3px;line-height:15.3px;color:#e7eaf1;font-weight:400;">—</div>
<div class="t" style="left:284.5px;top:522.35px;font-size:15.3px;line-height:15.3px;color:#00f2ae;font-weight:400;">$0.00</div>
<div class="t" style="left:386.5px;top:522.35px;font-size:15.3px;line-height:15.3px;color:#00f2ae;font-weight:400;">$0.00</div>
<div class="t" style="left:488.5px;top:522.35px;font-size:15.3px;line-height:15.3px;color:#e7eaf1;font-weight:400;">$0.00</div>
<div class="t" style="left:723.5px;top:521.35px;font-size:15.3px;line-height:15.3px;color:#e7eaf1;font-weight:400;">—</div>
<div class="t" style="left:836px;top:521.35px;font-size:15.3px;line-height:15.3px;color:#e7eaf1;font-weight:400;">—</div>
<div class="t" style="left:936px;top:521.35px;font-size:15.3px;line-height:15.3px;color:#e7eaf1;font-weight:400;">—</div>
<div class="t" style="left:1036px;top:521.35px;font-size:15.3px;line-height:15.3px;color:#e7eaf1;font-weight:400;">—</div>
<div class="t" style="left:1136.5px;top:522.35px;font-size:15.3px;line-height:15.3px;color:#e7eaf1;font-weight:400;">0</div>
<div class="t" style="left:1186.5px;top:522.35px;font-size:15.3px;line-height:15.3px;color:#00f2ae;font-weight:400;">$0.00</div>
<div style="left:19px;top:552px;width:1358px;height:31px;background:#493c28"></div>
<div style="left:19px;top:583px;width:1358px;height:1px;background:#4d4c49"></div>
<div style="left:19px;top:584px;width:1358px;height:2px;background:#232b48"></div>
<div style="left:41px;top:552px;width:2px;height:31px;background:#4b4538"></div>
<div style="left:65px;top:552px;width:2px;height:31px;background:#4b4538"></div>
<div style="left:230px;top:552px;width:2px;height:31px;background:#4b4538"></div>
<div style="left:280px;top:552px;width:2px;height:31px;background:#4b4538"></div>
<div style="left:382px;top:552px;width:2px;height:31px;background:#4b4538"></div>
<div style="left:484px;top:552px;width:2px;height:31px;background:#4b4538"></div>
<div style="left:612px;top:552px;width:2px;height:31px;background:#4b4538"></div>
<div style="left:720.5px;top:552px;width:2px;height:31px;background:#4b4538"></div>
<div style="left:832px;top:552px;width:2px;height:31px;background:#4b4538"></div>
<div style="left:932px;top:552px;width:2px;height:31px;background:#4b4538"></div>
<div style="left:1032px;top:552px;width:2px;height:31px;background:#4b4538"></div>
<div style="left:1132px;top:552px;width:2px;height:31px;background:#4b4538"></div>
<div style="left:1182px;top:552px;width:2px;height:31px;background:#4b4538"></div>
<div style="left:1375px;top:552px;width:2px;height:31px;background:#4b4538"></div>
<div style="left:24px;top:562px;width:12px;height:12px;border-radius:50%;background:#0becA3"></div>
<svg style="position:absolute;left:49px;top:555px" width="10" height="9"><path d="M0.8 0.8 L9.2 8.2 M9.2 0.8 L0.8 8.2" stroke="#8f96b4" stroke-width="1.3"/></svg>
<div style="left:67px;top:552px;width:163px;height:31px;overflow:hidden">
<div class="t" style="left:2.5px;top:4.43px;font-size:15.2px;line-height:15.2px;color:#e7eaf1;font-weight:400;">APEX30361000000554</div>
</div>
<div class="t" style="left:234px;top:555.35px;font-size:15.3px;line-height:15.3px;color:#e7eaf1;font-weight:400;">—</div>
<div class="t" style="left:284.5px;top:556.35px;font-size:15.3px;line-height:15.3px;color:#00f2ae;font-weight:400;">$0.00</div>
<div class="t" style="left:386.5px;top:556.35px;font-size:15.3px;line-height:15.3px;color:#00f2ae;font-weight:400;">$0.00</div>
<div class="t" style="left:488.5px;top:556.35px;font-size:15.3px;line-height:15.3px;color:#e7eaf1;font-weight:400;">$0.00</div>
<div class="t" style="left:723.5px;top:555.35px;font-size:15.3px;line-height:15.3px;color:#e7eaf1;font-weight:400;">—</div>
<div class="t" style="left:836px;top:555.35px;font-size:15.3px;line-height:15.3px;color:#e7eaf1;font-weight:400;">—</div>
<div class="t" style="left:936px;top:555.35px;font-size:15.3px;line-height:15.3px;color:#e7eaf1;font-weight:400;">—</div>
<div class="t" style="left:1036px;top:555.35px;font-size:15.3px;line-height:15.3px;color:#e7eaf1;font-weight:400;">—</div>
<div class="t" style="left:1136.5px;top:556.35px;font-size:15.3px;line-height:15.3px;color:#e7eaf1;font-weight:400;">0</div>
<div class="t" style="left:1186.5px;top:556.35px;font-size:15.3px;line-height:15.3px;color:#00f2ae;font-weight:400;">$0.00</div>
<div style="left:19px;top:586px;width:1358px;height:31px;background:#493c28"></div>
<div style="left:19px;top:617px;width:1358px;height:1px;background:#4d4c49"></div>
<div style="left:19px;top:618px;width:1358px;height:2px;background:#232b48"></div>
<div style="left:41px;top:586px;width:2px;height:31px;background:#4b4538"></div>
<div style="left:65px;top:586px;width:2px;height:31px;background:#4b4538"></div>
<div style="left:230px;top:586px;width:2px;height:31px;background:#4b4538"></div>
<div style="left:280px;top:586px;width:2px;height:31px;background:#4b4538"></div>
<div style="left:382px;top:586px;width:2px;height:31px;background:#4b4538"></div>
<div style="left:484px;top:586px;width:2px;height:31px;background:#4b4538"></div>
<div style="left:612px;top:586px;width:2px;height:31px;background:#4b4538"></div>
<div style="left:720.5px;top:586px;width:2px;height:31px;background:#4b4538"></div>
<div style="left:832px;top:586px;width:2px;height:31px;background:#4b4538"></div>
<div style="left:932px;top:586px;width:2px;height:31px;background:#4b4538"></div>
<div style="left:1032px;top:586px;width:2px;height:31px;background:#4b4538"></div>
<div style="left:1132px;top:586px;width:2px;height:31px;background:#4b4538"></div>
<div style="left:1182px;top:586px;width:2px;height:31px;background:#4b4538"></div>
<div style="left:1375px;top:586px;width:2px;height:31px;background:#4b4538"></div>
<div style="left:24px;top:596px;width:12px;height:12px;border-radius:50%;background:#0becA3"></div>
<svg style="position:absolute;left:49px;top:589px" width="10" height="9"><path d="M0.8 0.8 L9.2 8.2 M9.2 0.8 L0.8 8.2" stroke="#8f96b4" stroke-width="1.3"/></svg>
<div style="left:67px;top:586px;width:163px;height:31px;overflow:hidden">
<div class="t" style="left:2.5px;top:4.43px;font-size:15.2px;line-height:15.2px;color:#e7eaf1;font-weight:400;">APEX30361000000548</div>
</div>
<div class="t" style="left:234px;top:589.35px;font-size:15.3px;line-height:15.3px;color:#e7eaf1;font-weight:400;">—</div>
<div class="t" style="left:284.5px;top:590.35px;font-size:15.3px;line-height:15.3px;color:#00f2ae;font-weight:400;">$0.00</div>
<div class="t" style="left:386.5px;top:590.35px;font-size:15.3px;line-height:15.3px;color:#00f2ae;font-weight:400;">$0.00</div>
<div class="t" style="left:488.5px;top:590.35px;font-size:15.3px;line-height:15.3px;color:#e7eaf1;font-weight:400;">$0.00</div>
<div class="t" style="left:723.5px;top:589.35px;font-size:15.3px;line-height:15.3px;color:#e7eaf1;font-weight:400;">—</div>
<div class="t" style="left:836px;top:589.35px;font-size:15.3px;line-height:15.3px;color:#e7eaf1;font-weight:400;">—</div>
<div class="t" style="left:936px;top:589.35px;font-size:15.3px;line-height:15.3px;color:#e7eaf1;font-weight:400;">—</div>
<div class="t" style="left:1036px;top:589.35px;font-size:15.3px;line-height:15.3px;color:#e7eaf1;font-weight:400;">—</div>
<div class="t" style="left:1136.5px;top:590.35px;font-size:15.3px;line-height:15.3px;color:#e7eaf1;font-weight:400;">0</div>
<div class="t" style="left:1186.5px;top:590.35px;font-size:15.3px;line-height:15.3px;color:#00f2ae;font-weight:400;">$0.00</div>
<div style="left:19px;top:620px;width:1358px;height:31px;background:#493c28"></div>
<div style="left:19px;top:651px;width:1358px;height:1px;background:#4d4c49"></div>
<div style="left:19px;top:652px;width:1358px;height:2px;background:#232b48"></div>
<div style="left:41px;top:620px;width:2px;height:31px;background:#4b4538"></div>
<div style="left:65px;top:620px;width:2px;height:31px;background:#4b4538"></div>
<div style="left:230px;top:620px;width:2px;height:31px;background:#4b4538"></div>
<div style="left:280px;top:620px;width:2px;height:31px;background:#4b4538"></div>
<div style="left:382px;top:620px;width:2px;height:31px;background:#4b4538"></div>
<div style="left:484px;top:620px;width:2px;height:31px;background:#4b4538"></div>
<div style="left:612px;top:620px;width:2px;height:31px;background:#4b4538"></div>
<div style="left:720.5px;top:620px;width:2px;height:31px;background:#4b4538"></div>
<div style="left:832px;top:620px;width:2px;height:31px;background:#4b4538"></div>
<div style="left:932px;top:620px;width:2px;height:31px;background:#4b4538"></div>
<div style="left:1032px;top:620px;width:2px;height:31px;background:#4b4538"></div>
<div style="left:1132px;top:620px;width:2px;height:31px;background:#4b4538"></div>
<div style="left:1182px;top:620px;width:2px;height:31px;background:#4b4538"></div>
<div style="left:1375px;top:620px;width:2px;height:31px;background:#4b4538"></div>
<div style="left:24px;top:630px;width:12px;height:12px;border-radius:50%;background:#0becA3"></div>
<svg style="position:absolute;left:49px;top:623px" width="10" height="9"><path d="M0.8 0.8 L9.2 8.2 M9.2 0.8 L0.8 8.2" stroke="#8f96b4" stroke-width="1.3"/></svg>
<div style="left:67px;top:620px;width:163px;height:31px;overflow:hidden">
<div class="t" style="left:2.5px;top:4.43px;font-size:15.2px;line-height:15.2px;color:#e7eaf1;font-weight:400;">APEX30361000000552</div>
</div>
<div class="t" style="left:234px;top:623.35px;font-size:15.3px;line-height:15.3px;color:#e7eaf1;font-weight:400;">—</div>
<div class="t" style="left:284.5px;top:624.35px;font-size:15.3px;line-height:15.3px;color:#00f2ae;font-weight:400;">$0.00</div>
<div class="t" style="left:386.5px;top:624.35px;font-size:15.3px;line-height:15.3px;color:#00f2ae;font-weight:400;">$0.00</div>
<div class="t" style="left:488.5px;top:624.35px;font-size:15.3px;line-height:15.3px;color:#e7eaf1;font-weight:400;">$0.00</div>
<div class="t" style="left:723.5px;top:623.35px;font-size:15.3px;line-height:15.3px;color:#e7eaf1;font-weight:400;">—</div>
<div class="t" style="left:836px;top:623.35px;font-size:15.3px;line-height:15.3px;color:#e7eaf1;font-weight:400;">—</div>
<div class="t" style="left:936px;top:623.35px;font-size:15.3px;line-height:15.3px;color:#e7eaf1;font-weight:400;">—</div>
<div class="t" style="left:1036px;top:623.35px;font-size:15.3px;line-height:15.3px;color:#e7eaf1;font-weight:400;">—</div>
<div class="t" style="left:1136.5px;top:624.35px;font-size:15.3px;line-height:15.3px;color:#e7eaf1;font-weight:400;">0</div>
<div class="t" style="left:1186.5px;top:624.35px;font-size:15.3px;line-height:15.3px;color:#00f2ae;font-weight:400;">$0.00</div>
<div style="left:19px;top:654px;width:1358px;height:31px;background:#493c28"></div>
<div style="left:19px;top:685px;width:1358px;height:1px;background:#4d4c49"></div>
<div style="left:19px;top:686px;width:1358px;height:2px;background:#232b48"></div>
<div style="left:41px;top:654px;width:2px;height:31px;background:#4b4538"></div>
<div style="left:65px;top:654px;width:2px;height:31px;background:#4b4538"></div>
<div style="left:230px;top:654px;width:2px;height:31px;background:#4b4538"></div>
<div style="left:280px;top:654px;width:2px;height:31px;background:#4b4538"></div>
<div style="left:382px;top:654px;width:2px;height:31px;background:#4b4538"></div>
<div style="left:484px;top:654px;width:2px;height:31px;background:#4b4538"></div>
<div style="left:612px;top:654px;width:2px;height:31px;background:#4b4538"></div>
<div style="left:720.5px;top:654px;width:2px;height:31px;background:#4b4538"></div>
<div style="left:832px;top:654px;width:2px;height:31px;background:#4b4538"></div>
<div style="left:932px;top:654px;width:2px;height:31px;background:#4b4538"></div>
<div style="left:1032px;top:654px;width:2px;height:31px;background:#4b4538"></div>
<div style="left:1132px;top:654px;width:2px;height:31px;background:#4b4538"></div>
<div style="left:1182px;top:654px;width:2px;height:31px;background:#4b4538"></div>
<div style="left:1375px;top:654px;width:2px;height:31px;background:#4b4538"></div>
<div style="left:24px;top:664px;width:12px;height:12px;border-radius:50%;background:#0becA3"></div>
<svg style="position:absolute;left:49px;top:657px" width="10" height="9"><path d="M0.8 0.8 L9.2 8.2 M9.2 0.8 L0.8 8.2" stroke="#8f96b4" stroke-width="1.3"/></svg>
<div style="left:67px;top:654px;width:163px;height:31px;overflow:hidden">
<div class="t" style="left:2.5px;top:4.43px;font-size:15.2px;line-height:15.2px;color:#e7eaf1;font-weight:400;">APEX30361000000550</div>
</div>
<div class="t" style="left:234px;top:657.35px;font-size:15.3px;line-height:15.3px;color:#e7eaf1;font-weight:400;">—</div>
<div class="t" style="left:284.5px;top:658.35px;font-size:15.3px;line-height:15.3px;color:#00f2ae;font-weight:400;">$0.00</div>
<div class="t" style="left:386.5px;top:658.35px;font-size:15.3px;line-height:15.3px;color:#00f2ae;font-weight:400;">$0.00</div>
<div class="t" style="left:488.5px;top:658.35px;font-size:15.3px;line-height:15.3px;color:#e7eaf1;font-weight:400;">$0.00</div>
<div class="t" style="left:723.5px;top:657.35px;font-size:15.3px;line-height:15.3px;color:#e7eaf1;font-weight:400;">—</div>
<div class="t" style="left:836px;top:657.35px;font-size:15.3px;line-height:15.3px;color:#e7eaf1;font-weight:400;">—</div>
<div class="t" style="left:936px;top:657.35px;font-size:15.3px;line-height:15.3px;color:#e7eaf1;font-weight:400;">—</div>
<div class="t" style="left:1036px;top:657.35px;font-size:15.3px;line-height:15.3px;color:#e7eaf1;font-weight:400;">—</div>
<div class="t" style="left:1136.5px;top:658.35px;font-size:15.3px;line-height:15.3px;color:#e7eaf1;font-weight:400;">0</div>
<div class="t" style="left:1186.5px;top:658.35px;font-size:15.3px;line-height:15.3px;color:#00f2ae;font-weight:400;">$0.00</div>
<div style="left:19px;top:688px;width:1358px;height:31px;background:#493c28"></div>
<div style="left:19px;top:719px;width:1358px;height:1px;background:#4d4c49"></div>
<div style="left:19px;top:720px;width:1358px;height:2px;background:#232b48"></div>
<div style="left:41px;top:688px;width:2px;height:31px;background:#4b4538"></div>
<div style="left:65px;top:688px;width:2px;height:31px;background:#4b4538"></div>
<div style="left:230px;top:688px;width:2px;height:31px;background:#4b4538"></div>
<div style="left:280px;top:688px;width:2px;height:31px;background:#4b4538"></div>
<div style="left:382px;top:688px;width:2px;height:31px;background:#4b4538"></div>
<div style="left:484px;top:688px;width:2px;height:31px;background:#4b4538"></div>
<div style="left:612px;top:688px;width:2px;height:31px;background:#4b4538"></div>
<div style="left:720.5px;top:688px;width:2px;height:31px;background:#4b4538"></div>
<div style="left:832px;top:688px;width:2px;height:31px;background:#4b4538"></div>
<div style="left:932px;top:688px;width:2px;height:31px;background:#4b4538"></div>
<div style="left:1032px;top:688px;width:2px;height:31px;background:#4b4538"></div>
<div style="left:1132px;top:688px;width:2px;height:31px;background:#4b4538"></div>
<div style="left:1182px;top:688px;width:2px;height:31px;background:#4b4538"></div>
<div style="left:1375px;top:688px;width:2px;height:31px;background:#4b4538"></div>
<div style="left:24px;top:698px;width:12px;height:12px;border-radius:50%;background:#0becA3"></div>
<svg style="position:absolute;left:49px;top:691px" width="10" height="9"><path d="M0.8 0.8 L9.2 8.2 M9.2 0.8 L0.8 8.2" stroke="#8f96b4" stroke-width="1.3"/></svg>
<div style="left:67px;top:688px;width:163px;height:31px;overflow:hidden">
<div class="t" style="left:2.5px;top:4.43px;font-size:15.2px;line-height:15.2px;color:#e7eaf1;font-weight:400;">APEX30361000000545</div>
</div>
<div class="t" style="left:234px;top:691.35px;font-size:15.3px;line-height:15.3px;color:#e7eaf1;font-weight:400;">—</div>
<div class="t" style="left:284.5px;top:692.35px;font-size:15.3px;line-height:15.3px;color:#00f2ae;font-weight:400;">$0.00</div>
<div class="t" style="left:386.5px;top:692.35px;font-size:15.3px;line-height:15.3px;color:#00f2ae;font-weight:400;">$0.00</div>
<div class="t" style="left:488.5px;top:692.35px;font-size:15.3px;line-height:15.3px;color:#e7eaf1;font-weight:400;">$0.00</div>
<div class="t" style="left:723.5px;top:691.35px;font-size:15.3px;line-height:15.3px;color:#e7eaf1;font-weight:400;">—</div>
<div class="t" style="left:836px;top:691.35px;font-size:15.3px;line-height:15.3px;color:#e7eaf1;font-weight:400;">—</div>
<div class="t" style="left:936px;top:691.35px;font-size:15.3px;line-height:15.3px;color:#e7eaf1;font-weight:400;">—</div>
<div class="t" style="left:1036px;top:691.35px;font-size:15.3px;line-height:15.3px;color:#e7eaf1;font-weight:400;">—</div>
<div class="t" style="left:1136.5px;top:692.35px;font-size:15.3px;line-height:15.3px;color:#e7eaf1;font-weight:400;">0</div>
<div class="t" style="left:1186.5px;top:692.35px;font-size:15.3px;line-height:15.3px;color:#00f2ae;font-weight:400;">$0.00</div>
<div style="left:19px;top:722px;width:1358px;height:31px;background:#493c28"></div>
<div style="left:19px;top:753px;width:1358px;height:1px;background:#4d4c49"></div>
<div style="left:19px;top:754px;width:1358px;height:2px;background:#232b48"></div>
<div style="left:41px;top:722px;width:2px;height:31px;background:#4b4538"></div>
<div style="left:65px;top:722px;width:2px;height:31px;background:#4b4538"></div>
<div style="left:230px;top:722px;width:2px;height:31px;background:#4b4538"></div>
<div style="left:280px;top:722px;width:2px;height:31px;background:#4b4538"></div>
<div style="left:382px;top:722px;width:2px;height:31px;background:#4b4538"></div>
<div style="left:484px;top:722px;width:2px;height:31px;background:#4b4538"></div>
<div style="left:612px;top:722px;width:2px;height:31px;background:#4b4538"></div>
<div style="left:720.5px;top:722px;width:2px;height:31px;background:#4b4538"></div>
<div style="left:832px;top:722px;width:2px;height:31px;background:#4b4538"></div>
<div style="left:932px;top:722px;width:2px;height:31px;background:#4b4538"></div>
<div style="left:1032px;top:722px;width:2px;height:31px;background:#4b4538"></div>
<div style="left:1132px;top:722px;width:2px;height:31px;background:#4b4538"></div>
<div style="left:1182px;top:722px;width:2px;height:31px;background:#4b4538"></div>
<div style="left:1375px;top:722px;width:2px;height:31px;background:#4b4538"></div>
<div style="left:24px;top:732px;width:12px;height:12px;border-radius:50%;background:#0becA3"></div>
<svg style="position:absolute;left:49px;top:725px" width="10" height="9"><path d="M0.8 0.8 L9.2 8.2 M9.2 0.8 L0.8 8.2" stroke="#8f96b4" stroke-width="1.3"/></svg>
<div style="left:67px;top:722px;width:163px;height:31px;overflow:hidden">
<div class="t" style="left:2.5px;top:4.43px;font-size:15.2px;line-height:15.2px;color:#e7eaf1;font-weight:400;">APEX30361000000551</div>
</div>
<div class="t" style="left:234px;top:725.35px;font-size:15.3px;line-height:15.3px;color:#e7eaf1;font-weight:400;">—</div>
<div class="t" style="left:284.5px;top:726.35px;font-size:15.3px;line-height:15.3px;color:#00f2ae;font-weight:400;">$0.00</div>
<div class="t" style="left:386.5px;top:726.35px;font-size:15.3px;line-height:15.3px;color:#00f2ae;font-weight:400;">$0.00</div>
<div class="t" style="left:488.5px;top:726.35px;font-size:15.3px;line-height:15.3px;color:#e7eaf1;font-weight:400;">$0.00</div>
<div class="t" style="left:723.5px;top:725.35px;font-size:15.3px;line-height:15.3px;color:#e7eaf1;font-weight:400;">—</div>
<div class="t" style="left:836px;top:725.35px;font-size:15.3px;line-height:15.3px;color:#e7eaf1;font-weight:400;">—</div>
<div class="t" style="left:936px;top:725.35px;font-size:15.3px;line-height:15.3px;color:#e7eaf1;font-weight:400;">—</div>
<div class="t" style="left:1036px;top:725.35px;font-size:15.3px;line-height:15.3px;color:#e7eaf1;font-weight:400;">—</div>
<div class="t" style="left:1136.5px;top:726.35px;font-size:15.3px;line-height:15.3px;color:#e7eaf1;font-weight:400;">0</div>
<div class="t" style="left:1186.5px;top:726.35px;font-size:15.3px;line-height:15.3px;color:#00f2ae;font-weight:400;">$0.00</div>
<div style="left:1390px;top:115px;width:560px;height:671px;background:#151a30;border:1px solid #243054;border-radius:10px;box-sizing:border-box"></div>
<div class="t" style="left:1406px;top:135.99px;font-size:17.5px;line-height:17.5px;color:#f0f2f7;font-weight:700;letter-spacing:-0.6px;-webkit-text-stroke:0">Backtest</div>
<div class="t" style="left:1406px;top:159.04px;font-size:12.95px;line-height:12.95px;color:#8088a5;font-weight:400;">19 live snapshots • 03 Apr 2026 05:04</div>
<div style="left:1837px;top:130px;width:98px;height:42px;background:#1e2642;border:1px solid #28335a;border-radius:7px;box-sizing:border-box"></div>
<div class="t" style="left:1837px;top:145.86px;font-size:12.8px;line-height:12.8px;color:#e7eaf1;font-weight:400;width:98px;text-align:center;">Refresh</div>
<div style="left:1420px;top:203px;width:1px;height:478px;background:#212a42"></div>
<div style="left:1459px;top:203px;width:1px;height:478px;background:#212a42"></div>
<div style="left:1497px;top:203px;width:1px;height:478px;background:#212a42"></div>
<div style="left:1536px;top:203px;width:1px;height:478px;background:#212a42"></div>
<div style="left:1575px;top:203px;width:1px;height:478px;background:#212a42"></div>
<div style="left:1614px;top:203px;width:1px;height:478px;background:#212a42"></div>
<div style="left:1652px;top:203px;width:1px;height:478px;background:#212a42"></div>
<div style="left:1691px;top:203px;width:1px;height:478px;background:#212a42"></div>
<div style="left:1730px;top:203px;width:1px;height:478px;background:#212a42"></div>
<div style="left:1768px;top:203px;width:1px;height:478px;background:#212a42"></div>
<div style="left:1807px;top:203px;width:1px;height:478px;background:#212a42"></div>
<div style="left:1420px;top:203px;width:388px;height:1px;background:#212a42"></div>
<div style="left:1420px;top:362px;width:388px;height:1px;background:#212a42"></div>
<div style="left:1420px;top:521px;width:388px;height:1px;background:#212a42"></div>
<div style="left:1420px;top:680px;width:388px;height:1px;background:#212a42"></div>
<div class="t" style="left:1304.5px;top:197.69px;font-size:11px;line-height:11px;color:#8f96ab;font-weight:400;width:600px;text-align:right;-webkit-text-stroke:0">$1.24</div>
<div class="t" style="left:1304.5px;top:250.69px;font-size:11px;line-height:11px;color:#8f96ab;font-weight:400;width:600px;text-align:right;-webkit-text-stroke:0">$0.96</div>
<div class="t" style="left:1304.5px;top:303.69px;font-size:11px;line-height:11px;color:#8f96ab;font-weight:400;width:600px;text-align:right;-webkit-text-stroke:0">$0.69</div>
<div class="t" style="left:1304.5px;top:356.69px;font-size:11px;line-height:11px;color:#8f96ab;font-weight:400;width:600px;text-align:right;-webkit-text-stroke:0">$0.41</div>
<div class="t" style="left:1304.5px;top:409.69px;font-size:11px;line-height:11px;color:#8f96ab;font-weight:400;width:600px;text-align:right;-webkit-text-stroke:0">$0.14</div>
<div class="t" style="left:1304.5px;top:462.69px;font-size:11px;line-height:11px;color:#8f96ab;font-weight:400;width:600px;text-align:right;-webkit-text-stroke:0">-$0.14</div>
<div class="t" style="left:1304.5px;top:515.69px;font-size:11px;line-height:11px;color:#8f96ab;font-weight:400;width:600px;text-align:right;-webkit-text-stroke:0">-$0.41</div>
<div class="t" style="left:1304.5px;top:568.69px;font-size:11px;line-height:11px;color:#8f96ab;font-weight:400;width:600px;text-align:right;-webkit-text-stroke:0">-$0.69</div>
<div class="t" style="left:1304.5px;top:621.69px;font-size:11px;line-height:11px;color:#8f96ab;font-weight:400;width:600px;text-align:right;-webkit-text-stroke:0">-$0.96</div>
<div class="t" style="left:1304.5px;top:674.69px;font-size:11px;line-height:11px;color:#8f96ab;font-weight:400;width:600px;text-align:right;-webkit-text-stroke:0">-$1.24</div>
<div class="t" style="left:1421px;top:690.69px;font-size:11px;line-height:11px;color:#8f96ab;font-weight:400;-webkit-text-stroke:0">03 Apr</div>
<div class="t" style="left:1755px;top:690.69px;font-size:11px;line-height:11px;color:#8f96ab;font-weight:400;-webkit-text-stroke:0">03 Apr</div>
<div style="left:1420px;top:441px;width:387px;height:3px;background:#3cc6e6"></div>
<div style="left:1801.5px;top:437.5px;width:11px;height:11px;border-radius:50%;background:#08eea4;box-sizing:border-box;border:1.3px solid #e8eef4"></div>
<div style="left:1717px;top:378px;width:85px;height:51px;background:#161d36;border:1px solid #2a3558;border-radius:5px;box-sizing:border-box"></div>
<div class="t" style="left:1727px;top:388.92px;font-size:11.2px;line-height:11.2px;color:#8d95ad;font-weight:400;-webkit-text-stroke:0">03-Apr 05:04</div>
<div class="t" style="left:1727px;top:403.56px;font-size:16px;line-height:16px;color:#00f2ae;font-weight:400;">$0.00</div>
<div class="t" style="left:1423px;top:754.70px;font-size:15px;line-height:15px;color:#e7eaf1;font-weight:400;">Backtest</div>
<div class="t" style="left:1491px;top:754.70px;font-size:15px;line-height:15px;color:#e7eaf1;font-weight:400;">Current $0.00</div>
<div style="left:8px;top:796px;width:1952px;height:1px;background:#1c2747"></div>
<div style="left:18px;top:839px;width:1932px;height:1px;background:#1b2442"></div>
<div style="left:18px;top:803px;width:98px;height:31px;background:#1f2440;border:1px solid #283863;border-radius:8px;box-sizing:border-box"></div>
<div class="t" style="left:18px;top:813.12px;font-size:13.8px;line-height:13.8px;color:#e7eaf1;font-weight:400;width:98px;text-align:center;">Size</div>
<div style="left:120px;top:803px;width:98px;height:31px;background:#1f2440;border:1px solid #283863;border-radius:8px;box-sizing:border-box"></div>
<div class="t" style="left:120px;top:813.12px;font-size:13.8px;line-height:13.8px;color:#e7eaf1;font-weight:400;width:98px;text-align:center;">Type</div>
<div style="left:222px;top:803px;width:98px;height:31px;background:#1f2440;border:1px solid #283863;border-radius:8px;box-sizing:border-box"></div>
<div class="t" style="left:222px;top:813.12px;font-size:13.8px;line-height:13.8px;color:#e7eaf1;font-weight:400;width:98px;text-align:center;">Mode</div>
<div style="left:324px;top:803px;width:98px;height:31px;background:#1f2440;border:1px solid #283863;border-radius:8px;box-sizing:border-box"></div>
<div class="t" style="left:324px;top:813.12px;font-size:13.8px;line-height:13.8px;color:#e7eaf1;font-weight:400;width:98px;text-align:center;">Fade</div>
<div style="left:426px;top:803px;width:98px;height:31px;background:#1f2440;border:1px solid #283863;border-radius:8px;box-sizing:border-box"></div>
<div class="t" style="left:426px;top:813.12px;font-size:13.8px;line-height:13.8px;color:#e7eaf1;font-weight:400;width:98px;text-align:center;">Exit Shield</div>
<div style="left:528px;top:803px;width:98px;height:31px;background:#1f2440;border:1px solid #283863;border-radius:8px;box-sizing:border-box"></div>
<div class="t" style="left:528px;top:813.12px;font-size:13.8px;line-height:13.8px;color:#e7eaf1;font-weight:400;width:98px;text-align:center;">Skip Win</div>
<div style="left:630px;top:803px;width:98px;height:31px;background:#1f2440;border:1px solid #283863;border-radius:8px;box-sizing:border-box"></div>
<div class="t" style="left:630px;top:813.12px;font-size:13.8px;line-height:13.8px;color:#e7eaf1;font-weight:400;width:98px;text-align:center;">Skip Loss</div>
<div style="left:732px;top:803px;width:98px;height:31px;background:#1f2440;border:1px solid #283863;border-radius:8px;box-sizing:border-box"></div>
<div class="t" style="left:732px;top:813.12px;font-size:13.8px;line-height:13.8px;color:#e7eaf1;font-weight:400;width:98px;text-align:center;">Trail Goal</div>
<div style="left:834px;top:803px;width:98px;height:31px;background:#1f2440;border:1px solid #283863;border-radius:8px;box-sizing:border-box"></div>
<div class="t" style="left:834px;top:813.12px;font-size:13.8px;line-height:13.8px;color:#e7eaf1;font-weight:400;width:98px;text-align:center;">Goal Close</div>
<div class="t" style="left:1770px;top:811.75px;font-size:15.3px;line-height:15.3px;color:#e7eaf1;font-weight:400;">18 Total</div>
<div class="t" style="left:1844px;top:813.78px;font-size:12.9px;line-height:12.9px;color:#8a94b3;font-weight:400;">Total PNL:</div>
<div class="t" style="left:1911px;top:812.53px;font-size:15.2px;line-height:15.2px;color:#00f2ae;font-weight:400;">$0.00</div>
<div style="left:26px;top:845px;width:438px;height:145px;background:#19203a;border:1.5px solid #38d4f4;border-radius:9px;box-sizing:border-box"></div>
<div style="left:39px;top:858px;width:12px;height:12px;background:#474749"></div>
<svg style="position:absolute;left:39px;top:858px" width="12" height="12"><path d="M3.2 6.3 L5.4 8.3 L8.9 4.2" fill="none" stroke="#c4c4c4" stroke-width="1.5"/></svg>
<div class="t" style="left:67.5px;top:858.45px;font-size:14px;line-height:14px;color:#e7eaf1;font-weight:400;">Auto Master</div>
<div class="t" style="left:-149px;top:860.23px;font-size:11.9px;line-height:11.9px;color:#00f2ae;font-weight:400;width:600px;text-align:right;letter-spacing:-0.3px">W1 ACTIVE</div>
<div class="t" style="left:39.5px;top:888.01px;font-size:11.8px;line-height:11.8px;color:#e7eaf1;font-weight:400;">Acc 1</div>
<div class="t" style="left:227px;top:888.01px;font-size:11.8px;line-height:11.8px;color:#e7eaf1;font-weight:400;">Acc 4</div>
<div style="left:85px;top:882.0px;width:131px;height:23px;background:#0a0e1c;border:1px solid #2a386c;box-sizing:border-box"></div>
<div class="t" style="left:91.5px;top:889.19px;font-size:11px;line-height:11px;color:#e7eaf1;font-weight:400;">SimThor test</div>
<svg style="position:absolute;left:202px;top:889.0px" width="10" height="8"><path d="M1 1.5 L5 6 L9 1.5" fill="none" stroke="#dfe2ea" stroke-width="1.6"/></svg>
<div style="left:273px;top:882.0px;width:131px;height:23px;background:#0a0e1c;border:1px solid #2a386c;box-sizing:border-box"></div>
<div class="t" style="left:279.5px;top:889.19px;font-size:11px;line-height:11px;color:#e7eaf1;font-weight:400;">Sim VAlhalla</div>
<svg style="position:absolute;left:390px;top:889.0px" width="10" height="8"><path d="M1 1.5 L5 6 L9 1.5" fill="none" stroke="#dfe2ea" stroke-width="1.6"/></svg>
<div class="t" style="left:39.5px;top:917.26px;font-size:11.8px;line-height:11.8px;color:#e7eaf1;font-weight:400;">Acc 2</div>
<div class="t" style="left:227px;top:917.26px;font-size:11.8px;line-height:11.8px;color:#e7eaf1;font-weight:400;">Acc 5</div>
<div style="left:85px;top:911.25px;width:131px;height:23px;background:#0a0e1c;border:1px solid #2a386c;box-sizing:border-box"></div>
<div class="t" style="left:91.5px;top:918.44px;font-size:11px;line-height:11px;color:#e7eaf1;font-weight:400;">SimThor</div>
<svg style="position:absolute;left:202px;top:918.25px" width="10" height="8"><path d="M1 1.5 L5 6 L9 1.5" fill="none" stroke="#dfe2ea" stroke-width="1.6"/></svg>
<div style="left:273px;top:911.25px;width:131px;height:23px;background:#0a0e1c;border:1px solid #2a386c;box-sizing:border-box"></div>
<svg style="position:absolute;left:390px;top:918.25px" width="10" height="8"><path d="M1 1.5 L5 6 L9 1.5" fill="none" stroke="#dfe2ea" stroke-width="1.6"/></svg>
<div class="t" style="left:39.5px;top:946.51px;font-size:11.8px;line-height:11.8px;color:#e7eaf1;font-weight:400;">Acc 3</div>
<div class="t" style="left:227px;top:946.51px;font-size:11.8px;line-height:11.8px;color:#e7eaf1;font-weight:400;">Acc 6</div>
<div style="left:85px;top:940.5px;width:131px;height:23px;background:#0a0e1c;border:1px solid #2a386c;box-sizing:border-box"></div>
<div class="t" style="left:91.5px;top:947.69px;font-size:11px;line-height:11px;color:#e7eaf1;font-weight:400;">SimFreya</div>
<svg style="position:absolute;left:202px;top:947.5px" width="10" height="8"><path d="M1 1.5 L5 6 L9 1.5" fill="none" stroke="#dfe2ea" stroke-width="1.6"/></svg>
<div style="left:273px;top:940.5px;width:131px;height:23px;background:#0a0e1c;border:1px solid #2a386c;box-sizing:border-box"></div>
<svg style="position:absolute;left:390px;top:947.5px" width="10" height="8"><path d="M1 1.5 L5 6 L9 1.5" fill="none" stroke="#dfe2ea" stroke-width="1.6"/></svg>
<div class="t" style="left:39.5px;top:969.80px;font-size:11.1px;line-height:11.1px;color:#7c84a0;font-weight:400;white-space:pre">W1 live: SimThor test=$0.00&nbsp; SimThor=$0.00&nbsp; SimFreya=$0.00&nbsp; Sim VAlhalla=$0.00</div>
<div style="left:464px;top:845px;width:194px;height:129px;background:#19203a;border:1.5px solid #04eca6;border-radius:9px;box-sizing:border-box"></div>
<div style="left:477px;top:858px;width:12px;height:12px;background:#474749"></div>
<svg style="position:absolute;left:477px;top:858px" width="12" height="12"><path d="M3.2 6.3 L5.4 8.3 L8.9 4.2" fill="none" stroke="#c4c4c4" stroke-width="1.5"/></svg>
<div class="t" style="left:505px;top:858.15px;font-size:14px;line-height:14px;color:#e7eaf1;font-weight:400;">Auto Schedule</div>
<div class="t" style="left:605px;top:860.18px;font-size:11.6px;line-height:11.6px;color:#00f2ae;font-weight:400;letter-spacing:-0.25px">ACTIVE</div>
<div style="left:477px;top:887px;width:12px;height:12px;background:#474749"></div>
<svg style="position:absolute;left:477px;top:887px" width="12" height="12"><path d="M3.2 6.3 L5.4 8.3 L8.9 4.2" fill="none" stroke="#c4c4c4" stroke-width="1.5"/></svg>
<div class="t" style="left:501px;top:888.42px;font-size:12.5px;line-height:12.5px;color:#e7eaf1;font-weight:400;">W1</div>
<div style="left:535px;top:881px;width:52px;height:23px;background:#0a0e1c;border:1px solid #2a386c;box-sizing:border-box"></div>
<div class="t" style="left:535px;top:887.95px;font-size:11px;line-height:11px;color:#e7eaf1;font-weight:400;width:52px;text-align:center;">00:15</div>
<div class="t" style="left:588.5px;top:886.53px;font-size:10px;line-height:10px;color:#7c84a0;font-weight:400;">-</div>
<div style="left:593px;top:881px;width:52px;height:23px;background:#0a0e1c;border:1px solid #2a386c;box-sizing:border-box"></div>
<div class="t" style="left:593px;top:887.95px;font-size:11px;line-height:11px;color:#e7eaf1;font-weight:400;width:52px;text-align:center;">08:45</div>
<div style="left:477px;top:917px;width:12px;height:12px;background:#474749"></div>
<svg style="position:absolute;left:477px;top:917px" width="12" height="12"><path d="M3.2 6.3 L5.4 8.3 L8.9 4.2" fill="none" stroke="#c4c4c4" stroke-width="1.5"/></svg>
<div class="t" style="left:501px;top:918.42px;font-size:12.5px;line-height:12.5px;color:#e7eaf1;font-weight:400;">W2</div>
<div style="left:535px;top:911px;width:52px;height:23px;background:#0a0e1c;border:1px solid #2a386c;box-sizing:border-box"></div>
<div class="t" style="left:535px;top:917.95px;font-size:11px;line-height:11px;color:#e7eaf1;font-weight:400;width:52px;text-align:center;">09:30</div>
<div class="t" style="left:588.5px;top:916.53px;font-size:10px;line-height:10px;color:#7c84a0;font-weight:400;">-</div>
<div style="left:593px;top:911px;width:52px;height:23px;background:#0a0e1c;border:1px solid #2a386c;box-sizing:border-box"></div>
<div class="t" style="left:593px;top:917.95px;font-size:11px;line-height:11px;color:#e7eaf1;font-weight:400;width:52px;text-align:center;">13:30</div>
<div style="left:477px;top:947px;width:12px;height:12px;background:#474749"></div>
<svg style="position:absolute;left:477px;top:947px" width="12" height="12"><path d="M3.2 6.3 L5.4 8.3 L8.9 4.2" fill="none" stroke="#c4c4c4" stroke-width="1.5"/></svg>
<div class="t" style="left:501px;top:948.42px;font-size:12.5px;line-height:12.5px;color:#e7eaf1;font-weight:400;">W3</div>
<div style="left:535px;top:941px;width:52px;height:23px;background:#0a0e1c;border:1px solid #2a386c;box-sizing:border-box"></div>
<div class="t" style="left:535px;top:947.95px;font-size:11px;line-height:11px;color:#e7eaf1;font-weight:400;width:52px;text-align:center;">14:40</div>
<div class="t" style="left:588.5px;top:946.53px;font-size:10px;line-height:10px;color:#7c84a0;font-weight:400;">-</div>
<div style="left:593px;top:941px;width:52px;height:23px;background:#0a0e1c;border:1px solid #2a386c;box-sizing:border-box"></div>
<div class="t" style="left:593px;top:947.95px;font-size:11px;line-height:11px;color:#e7eaf1;font-weight:400;width:52px;text-align:center;">18:00</div>
<div style="left:666px;top:845px;width:163px;height:126px;background:#19203a;border:1.5px solid #04eca6;border-radius:9px;box-sizing:border-box"></div>
<div style="left:679px;top:858px;width:12px;height:12px;background:#474749"></div>
<svg style="position:absolute;left:679px;top:858px" width="12" height="12"><path d="M3.2 6.3 L5.4 8.3 L8.9 4.2" fill="none" stroke="#c4c4c4" stroke-width="1.5"/></svg>
<div class="t" style="left:707px;top:858.83px;font-size:13.2px;line-height:13.2px;color:#e7eaf1;font-weight:400;">Session Size</div>
<div class="t" style="left:783.5px;top:860.18px;font-size:11.6px;line-height:11.6px;color:#00f2ae;font-weight:400;letter-spacing:-0.2px">W1:1q</div>
<div class="t" style="left:679px;top:885.42px;font-size:12.5px;line-height:12.5px;color:#e7eaf1;font-weight:400;">W1</div>
<div style="left:713px;top:880.0px;width:40px;height:23.0px;background:#0a0e1c;border:1px solid #2a386c;box-sizing:border-box"></div>
<div class="t" style="left:713px;top:886.71px;font-size:11.5px;line-height:11.5px;color:#e7eaf1;font-weight:400;width:40px;text-align:center;">1</div>
<div class="t" style="left:759.5px;top:887.35px;font-size:11.4px;line-height:11.4px;color:#7c84a0;font-weight:400;">max</div>
<div class="t" style="left:679px;top:914.62px;font-size:12.5px;line-height:12.5px;color:#e7eaf1;font-weight:400;">W2</div>
<div style="left:713px;top:909.2px;width:40px;height:23.0px;background:#0a0e1c;border:1px solid #2a386c;box-sizing:border-box"></div>
<div class="t" style="left:713px;top:915.91px;font-size:11.5px;line-height:11.5px;color:#e7eaf1;font-weight:400;width:40px;text-align:center;">3</div>
<div class="t" style="left:759.5px;top:916.55px;font-size:11.4px;line-height:11.4px;color:#7c84a0;font-weight:400;">max</div>
<div class="t" style="left:679px;top:943.82px;font-size:12.5px;line-height:12.5px;color:#e7eaf1;font-weight:400;">W3</div>
<div style="left:713px;top:938.4px;width:40px;height:23.0px;background:#0a0e1c;border:1px solid #2a386c;box-sizing:border-box"></div>
<div class="t" style="left:713px;top:945.11px;font-size:11.5px;line-height:11.5px;color:#e7eaf1;font-weight:400;width:40px;text-align:center;">4</div>
<div class="t" style="left:759.5px;top:945.75px;font-size:11.4px;line-height:11.4px;color:#7c84a0;font-weight:400;">max</div>
<div style="left:837px;top:845px;width:326px;height:92px;background:#19203a;border:1.5px solid #04eca6;border-radius:9px;box-sizing:border-box"></div>
<div style="left:850px;top:858px;width:12px;height:12px;background:#474749"></div>
<svg style="position:absolute;left:850px;top:858px" width="12" height="12"><path d="M3.2 6.3 L5.4 8.3 L8.9 4.2" fill="none" stroke="#c4c4c4" stroke-width="1.5"/></svg>
<div class="t" style="left:878.5px;top:858.52px;font-size:13.8px;line-height:13.8px;color:#e7eaf1;font-weight:400;">Telegram</div>
<div class="t" style="left:550px;top:859.62px;font-size:12.5px;line-height:12.5px;color:#00f2ae;font-weight:400;width:600px;text-align:right;">ON</div>
<div class="t" style="left:850.5px;top:885.93px;font-size:11.3px;line-height:11.3px;color:#e7eaf1;font-weight:400;">Token</div>
<div style="left:896px;top:880px;width:254px;height:22px;background:#0a0e1c;border:1px solid #2a386c;box-sizing:border-box"></div>
<div class="t" style="left:903px;top:887.17px;font-size:9.6px;line-height:9.6px;color:#e7eaf1;font-weight:400;letter-spacing:-0.1px">8648661569:AAFmHt35eMs3GIK2BZFBNmj2jUjhHVxPz-k</div>
<div class="t" style="left:850.5px;top:911.03px;font-size:11.3px;line-height:11.3px;color:#e7eaf1;font-weight:400;">Chat ID</div>
<div style="left:896px;top:906px;width:152px;height:22px;background:#0a0e1c;border:1px solid #2a386c;box-sizing:border-box"></div>
<div class="t" style="left:903px;top:913.34px;font-size:9.4px;line-height:9.4px;color:#e7eaf1;font-weight:400;letter-spacing:-0.2px">5290813104</div>
<div style="left:1052px;top:906px;width:98px;height:22px;background:#1e2642;border:1px solid #28335a;border-radius:4px;box-sizing:border-box"></div>
<div class="t" style="left:1052px;top:912.97px;font-size:10.2px;line-height:10.2px;color:#e7eaf1;font-weight:400;width:98px;text-align:center;">Test</div>
<div style="left:1171px;top:845px;width:162px;height:69px;background:#19203a;border:1.5px solid #04eca6;border-radius:9px;box-sizing:border-box"></div>
<div style="left:1184px;top:858px;width:12px;height:12px;background:#474749"></div>
<svg style="position:absolute;left:1184px;top:858px" width="12" height="12"><path d="M3.2 6.3 L5.4 8.3 L8.9 4.2" fill="none" stroke="#c4c4c4" stroke-width="1.5"/></svg>
<div class="t" style="left:1212.5px;top:858.15px;font-size:14px;line-height:14px;color:#e7eaf1;font-weight:400;">Auto Recovery</div>
<div class="t" style="left:720px;top:860.35px;font-size:11.4px;line-height:11.4px;color:#00f2ae;font-weight:400;width:600px;text-align:right;">OK</div>
<div class="t" style="left:1184.3px;top:887.82px;font-size:11.2px;line-height:11.2px;color:#e7eaf1;font-weight:400;">Reset at</div>
<div style="left:1236px;top:881px;width:52px;height:24px;background:#0a0e1c;border:1px solid #2a386c;box-sizing:border-box"></div>
<div class="t" style="left:1236px;top:888.35px;font-size:11.2px;line-height:11.2px;color:#e7eaf1;font-weight:400;width:52px;text-align:center;">23:00</div>
<div style="left:1341px;top:845px;width:170px;height:69px;background:#19203a;border:1.5px solid #04eca6;border-radius:9px;box-sizing:border-box"></div>
<div style="left:1354px;top:858px;width:12px;height:12px;background:#474749"></div>
<svg style="position:absolute;left:1354px;top:858px" width="12" height="12"><path d="M3.2 6.3 L5.4 8.3 L8.9 4.2" fill="none" stroke="#c4c4c4" stroke-width="1.5"/></svg>
<div class="t" style="left:1382px;top:858.15px;font-size:14px;line-height:14px;color:#e7eaf1;font-weight:400;">Auto Follower</div>
<div class="t" style="left:897.5px;top:859.67px;font-size:12.2px;line-height:12.2px;color:#00f2ae;font-weight:400;width:600px;text-align:right;">$300</div>
<div class="t" style="left:1354.4px;top:887.06px;font-size:12.1px;line-height:12.1px;color:#e7eaf1;font-weight:400;">Drawdown $</div>
<div style="left:1432px;top:881px;width:60px;height:24px;background:#0a0e1c;border:1px solid #2a386c;box-sizing:border-box"></div>
<div class="t" style="left:1432px;top:888.35px;font-size:11.2px;line-height:11.2px;color:#e7eaf1;font-weight:400;width:60px;text-align:center;">300</div>
<div style="left:26px;top:997px;width:104px;height:25px;background:#1c1c1c;border:1px solid #1a7fd4;border-top:none;box-sizing:border-box"></div>
<div class="t" style="left:33.5px;top:1002.33px;font-size:13.9px;line-height:13.9px;color:#1b80d6;font-weight:400;-webkit-text-stroke:0.35px #1f86dc">Trade Copier</div>
<div style="left:131px;top:998px;width:22px;height:21px;background:#3d3d40"></div>
<div style="left:136px;top:1007px;width:10px;height:2px;background:#e8e8e8"></div>
<div style="left:140px;top:1003px;width:2px;height:10px;background:#e8e8e8"></div>
<div style="left:0px;top:1028px;width:1968px;height:2px;background:#262626"></div>
</body></html>
